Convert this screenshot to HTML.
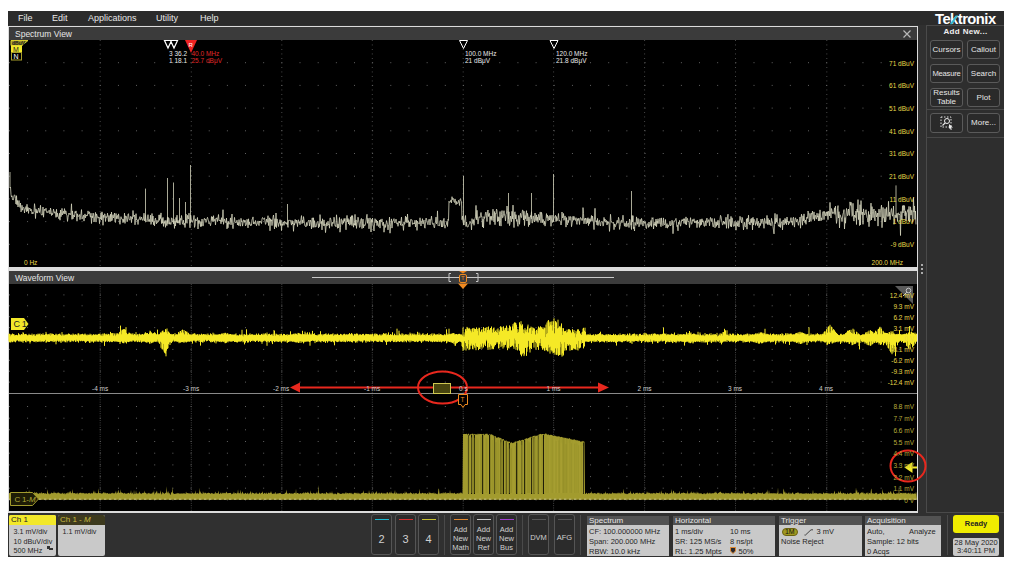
<!DOCTYPE html>
<html><head><meta charset="utf-8">
<style>
*{margin:0;padding:0;box-sizing:border-box}
html,body{width:1012px;height:567px;background:#fff;overflow:hidden}
body{position:relative;font-family:"Liberation Sans",sans-serif;}
.a{position:absolute}
.frame{left:8px;top:11px;width:996px;height:546px;background:#303030}
.menu{left:8px;top:11px;width:996px;height:14px;background:#2b2b2b;color:#e8e8e8;font-size:9px;line-height:14px}
.menu span{position:absolute;top:0}
.logo{left:935px;top:11px;font-size:14.8px;font-weight:bold;color:#fff;letter-spacing:-0.55px;line-height:16px}
.title{background:#3b3b3b;color:#e6e6e6;font-size:8.5px;line-height:14.5px;padding-left:6px}
.plot{background:#000}
.lbl{position:absolute;color:#e8d84a;font-size:6.5px;line-height:7px;white-space:nowrap}
.lbl2{position:absolute;color:#b8ac3a;font-size:6.5px;line-height:7px;white-space:nowrap}
.wt{position:absolute;color:#e8e8e8;font-size:6.5px;line-height:7px;white-space:nowrap}
.btn{position:absolute;background:#2a2a2a;border:1px solid #5a5a5a;border-radius:3px;color:#e6e6e6;font-size:8px;text-align:center}
.bb{position:absolute;background:#2b2b2b;border:1px solid #555;border-radius:3px;color:#d0d0d0;text-align:center}
.box{position:absolute;background:#c9c9c9}
.box .h{position:absolute;left:0;top:0;right:0;height:9px;background:#525252;color:#e8e8e8;font-size:8px;line-height:9px;padding-left:2px}
.box .t{position:absolute;color:#262626;font-size:7.5px;line-height:8.5px;white-space:nowrap}
</style></head><body>
<div class="a frame"></div>
<div class="a menu">
<span style="left:10px">File</span><span style="left:44px">Edit</span><span style="left:80px">Applications</span><span style="left:148px">Utility</span><span style="left:192px">Help</span>
</div>
<div class="a logo">Te<span style="color:#fff">k</span>tronix</div>
<svg class="a" style="left:948px;top:12px" width="12" height="14" viewBox="0 0 12 14"><path d="M1.8 12.2 L4.3 12.2 L10.2 3.4 L7.7 3.4 Z" fill="#30b8d0"/></svg>

<!-- spectrum view -->
<div class="a" style="left:8px;top:26px;width:910px;height:245px;background:#dcdcdc"></div>
<div class="a title" style="left:9px;top:27px;width:908px;height:13px">Spectrum View</div>
<div class="a plot" style="left:9px;top:40px;width:908px;height:227px"></div>

<!-- waveform view -->
<div class="a" style="left:8px;top:271px;width:910px;height:242px;background:#dcdcdc"></div>
<div class="a title" style="left:9px;top:271px;width:908px;height:13px">Waveform View</div>
<div class="a plot" style="left:9px;top:284px;width:908px;height:227px"></div>


<!-- right panel -->
<div class="a" style="left:926px;top:25px;width:78px;height:488px;border:1px solid #4a4a4a;border-right:none;background:#2e2e2e"></div>
<div class="a" style="left:927px;top:27px;width:77px;text-align:center;color:#eeeeee;font-size:8px;font-weight:bold;line-height:10px;letter-spacing:0.35px">Add New...</div>
<div class="btn" style="left:930px;top:40px;width:33px;height:19px;line-height:17px">Cursors</div>
<div class="btn" style="left:967px;top:40px;width:33px;height:19px;line-height:17px">Callout</div>
<div class="btn" style="left:930px;top:64px;width:33px;height:19px;line-height:17px;font-size:7.6px;letter-spacing:-0.2px">Measure</div>
<div class="btn" style="left:967px;top:64px;width:33px;height:19px;line-height:17px">Search</div>
<div class="btn" style="left:930px;top:88px;width:33px;height:19px;line-height:8.5px;padding-top:0px">Results<br>Table</div>
<div class="btn" style="left:967px;top:88px;width:33px;height:19px;line-height:17px">Plot</div>
<div class="a" style="left:927px;top:109px;width:77px;height:1px;background:#484848"></div>
<div class="btn" style="left:930px;top:113px;width:33px;height:20px"></div>
<div class="btn" style="left:967px;top:113px;width:33px;height:20px;line-height:18px">More...</div>
<div class="a" style="left:927px;top:137px;width:77px;height:1px;background:#484848"></div>
<svg class="a" style="left:939px;top:115px" width="16" height="16" viewBox="0 0 16 16">
<rect x="2" y="2" width="10" height="10" fill="none" stroke="#ddd" stroke-width="1" stroke-dasharray="1.5 1.5"/>
<circle cx="8" cy="6" r="2.5" fill="none" stroke="#eee" stroke-width="1"/>
<line x1="6.2" y1="7.8" x2="3.5" y2="10.5" stroke="#eee" stroke-width="1.2"/>
<path d="M10 9 L14 12.5 L12 12.5 L12.8 14.5 L11.8 15 L11 13 L10 14 Z" fill="#eee"/>
</svg>

<!-- close X -->
<svg class="a" style="left:902px;top:29px" width="10" height="10" viewBox="0 0 10 10"><path d="M1.5 1.5 L8.5 8.5 M8.5 1.5 L1.5 8.5" stroke="#b8b8b8" stroke-width="1.2"/></svg>

<!-- splitter dots -->
<div class="a" style="left:921px;top:264px;width:2px;height:2px;background:#aaa"></div>
<div class="a" style="left:921px;top:268px;width:2px;height:2px;background:#aaa"></div>
<div class="a" style="left:921px;top:272px;width:2px;height:2px;background:#aaa"></div>


<!-- bottom bar -->
<div class="box" style="left:9px;top:515px;width:47px;height:41px;border-radius:2px;overflow:hidden">
 <div class="h" style="background:#f2e82a;color:#222;height:10px;line-height:10px">Ch 1</div>
 <div class="t" style="left:4.5px;top:13px;font-size:7.2px">3.1 mV/div</div>
 <div class="t" style="left:4.5px;top:22.8px;font-size:7.2px">10 dBuV/div</div>
 <div class="t" style="left:4.5px;top:32.3px;font-size:7.2px">500 MHz</div>
 <div class="a" style="left:38px;top:31px;width:3px;height:3px;background:#333"></div>
 <div class="a" style="left:40px;top:33px;width:4px;height:2px;background:#333"></div>
</div>
<div class="box" style="left:58px;top:515px;width:47px;height:41px;border-radius:2px;overflow:hidden">
 <div class="h" style="background:#3d3a1e;color:#c8b840;height:10px;line-height:10px">Ch 1 - <i>M</i></div>
 <div class="t" style="left:4.5px;top:13px;font-size:7.2px">1.1 mV/div</div>
</div>

<div class="bb" style="left:371px;top:514px;width:21px;height:41px"><div class="a" style="left:2.5px;top:4px;width:14.5px;height:1px;background:#1cb8d0"></div><div class="a" style="left:0;top:17.5px;width:19px;font-size:11px;line-height:12px">2</div></div>
<div class="bb" style="left:395px;top:514px;width:21px;height:41px"><div class="a" style="left:2.5px;top:4px;width:14.5px;height:1px;background:#d83030"></div><div class="a" style="left:0;top:17.5px;width:19px;font-size:11px;line-height:12px">3</div></div>
<div class="bb" style="left:418px;top:514px;width:21px;height:41px"><div class="a" style="left:2.5px;top:4px;width:14.5px;height:1px;background:#c8c030"></div><div class="a" style="left:0;top:17.5px;width:19px;font-size:11px;line-height:12px">4</div></div>
<div class="a" style="left:444px;top:515px;width:1px;height:40px;background:#4a4a4a"></div>
<div class="bb" style="left:450px;top:514px;width:21px;height:41px;font-size:7.5px;line-height:8.5px"><div class="a" style="left:2.5px;top:4px;width:14.5px;height:1px;background:#e08830"></div><div class="a" style="left:0;top:10px;width:19px;line-height:9px">Add<br>New<br>Math</div></div>
<div class="bb" style="left:473px;top:514px;width:21px;height:41px;font-size:7.5px;line-height:8.5px"><div class="a" style="left:2.5px;top:4px;width:14.5px;height:1px;background:#c8c8c8"></div><div class="a" style="left:0;top:10px;width:19px;line-height:9px">Add<br>New<br>Ref</div></div>
<div class="bb" style="left:496px;top:514px;width:21px;height:41px;font-size:7.5px;line-height:8.5px"><div class="a" style="left:2.5px;top:4px;width:14.5px;height:1px;background:#a040d0"></div><div class="a" style="left:0;top:10px;width:19px;line-height:9px">Add<br>New<br>Bus</div></div>
<div class="a" style="left:522px;top:515px;width:1px;height:40px;background:#4a4a4a"></div>
<div class="bb" style="left:528px;top:514px;width:21px;height:41px;font-size:7.5px"><div class="a" style="left:2.5px;top:4px;width:14.5px;height:1px;background:#555"></div><div class="a" style="left:-2px;top:18px;width:23px;line-height:9px">DVM</div></div>
<div class="bb" style="left:554px;top:514px;width:21px;height:41px;font-size:7.5px"><div class="a" style="left:2.5px;top:4px;width:14.5px;height:1px;background:#555"></div><div class="a" style="left:-2px;top:18px;width:23px;line-height:9px">AFG</div></div>
<div class="a" style="left:580px;top:515px;width:1px;height:40px;background:#4a4a4a"></div>

<div class="box" style="left:587px;top:516px;width:82px;height:40px">
 <div class="h">Spectrum</div>
 <div class="t" style="left:2px;top:11.6px">CF: 100.000000 MHz</div>
 <div class="t" style="left:2px;top:21.8px">Span: 200.000 MHz</div>
 <div class="t" style="left:2px;top:31.9px">RBW: 10.0 kHz</div>
</div>
<div class="box" style="left:673px;top:516px;width:102px;height:40px">
 <div class="h">Horizontal</div>
 <div class="t" style="left:2px;top:11.6px">1 ms/div</div>
 <div class="t" style="left:57px;top:11.6px">10 ms</div>
 <div class="t" style="left:2px;top:21.8px">SR: 125 MS/s</div>
 <div class="t" style="left:57px;top:21.8px">8 ns/pt</div>
 <div class="t" style="left:2px;top:31.9px">RL: 1.25 Mpts</div>
 <svg class="a" style="left:57px;top:31px" width="6" height="7" viewBox="0 0 6 7"><path d="M0.5 0.5 H5.5 V4 L3 6.5 L0.5 4 Z" fill="#2a2a30" stroke="#e08830" stroke-width="1"/></svg>
 <div class="t" style="left:65.5px;top:31.9px">50%</div>
</div>
<div class="box" style="left:779px;top:516px;width:83px;height:40px">
 <div class="h">Trigger</div>
 <div class="a" style="left:3px;top:12px;width:15.5px;height:8px;border-radius:4px;background:#a09820;border:1px solid #6a6210;color:#111;font-size:7px;line-height:6.5px;text-align:center">1M</div>
 <svg class="a" style="left:25px;top:12.5px" width="10" height="8" viewBox="0 0 10 8"><path d="M0.5 6 H1.5 L7 0.8 H9" fill="none" stroke="#333" stroke-width="0.9"/></svg>
 <div class="t" style="left:37.5px;top:12px">3 mV</div>
 <div class="t" style="left:2px;top:21.5px">Noise Reject</div>
</div>
<div class="box" style="left:865px;top:516px;width:76px;height:40px">
 <div class="h">Acquisition</div>
 <div class="t" style="left:2px;top:11.6px">Auto,</div>
 <div class="t" style="left:44px;top:11.6px">Analyze</div>
 <div class="t" style="left:2px;top:21.8px">Sample: 12 bits</div>
 <div class="t" style="left:2px;top:31.9px">0 Acqs</div>
</div>
<div class="a" style="left:947px;top:515px;width:1px;height:40px;background:#4a4a4a"></div>
<div class="a" style="left:953px;top:515px;width:46px;height:18px;background:#f0ec00;border-radius:3px;color:#222;font-size:7.5px;font-weight:bold;line-height:18px;text-align:center">Ready</div>
<div class="box" style="left:953px;top:538px;width:46px;height:18px;border-radius:2px;text-align:center">
 <div class="t" style="left:0;width:46px;top:0.5px;text-align:center">28 May 2020</div>
 <div class="t" style="left:0;width:46px;top:9px;text-align:center">3:40:11 PM</div>
</div>

<svg class="a" style="left:0;top:0" width="1012" height="567" viewBox="0 0 1012 567">
<g fill="none" stroke="#6a6a6a" stroke-width="1">
<!-- spectrum grid -->
<g id="sg"></g>
</g>
<g fill="none" stroke="#6c6c6c" stroke-width="1"><line x1="100.2" y1="40" x2="100.2" y2="267" stroke="#505050" stroke-dasharray="0.9 3.6"/><line x1="191.3" y1="40" x2="191.3" y2="267" stroke="#505050" stroke-dasharray="0.9 3.6"/><line x1="281.8" y1="40" x2="281.8" y2="267" stroke="#505050" stroke-dasharray="0.9 3.6"/><line x1="372.3" y1="40" x2="372.3" y2="267" stroke="#505050" stroke-dasharray="0.9 3.6"/><line x1="463.2" y1="40" x2="463.2" y2="267" stroke="#505050" stroke-dasharray="0.9 3.6"/><line x1="553.6" y1="40" x2="553.6" y2="267" stroke="#505050" stroke-dasharray="0.9 3.6"/><line x1="644.6" y1="40" x2="644.6" y2="267" stroke="#505050" stroke-dasharray="0.9 3.6"/><line x1="735.5" y1="40" x2="735.5" y2="267" stroke="#505050" stroke-dasharray="0.9 3.6"/><line x1="826.8" y1="40" x2="826.8" y2="267" stroke="#505050" stroke-dasharray="0.9 3.6"/><line x1="9" y1="62.7" x2="917" y2="62.7" stroke-dasharray="0.9 17.26" stroke-dashoffset="-18.16"/><line x1="9" y1="85.4" x2="917" y2="85.4" stroke-dasharray="0.9 17.26" stroke-dashoffset="-18.16"/><line x1="9" y1="108.1" x2="917" y2="108.1" stroke-dasharray="0.9 17.26" stroke-dashoffset="-18.16"/><line x1="9" y1="130.8" x2="917" y2="130.8" stroke-dasharray="0.9 17.26" stroke-dashoffset="-18.16"/><line x1="9" y1="153.5" x2="917" y2="153.5" stroke-dasharray="0.9 17.26" stroke-dashoffset="-18.16"/><line x1="9" y1="176.2" x2="917" y2="176.2" stroke-dasharray="0.9 17.26" stroke-dashoffset="-18.16"/><line x1="9" y1="198.9" x2="917" y2="198.9" stroke-dasharray="0.9 17.26" stroke-dashoffset="-18.16"/><line x1="9" y1="221.6" x2="917" y2="221.6" stroke-dasharray="0.9 17.26" stroke-dashoffset="-18.16"/><line x1="9" y1="244.3" x2="917" y2="244.3" stroke-dasharray="0.9 17.26" stroke-dashoffset="-18.16"/><line x1="100.2" y1="284" x2="100.2" y2="393" stroke="#484848" stroke-dasharray="0.9 1.3"/><line x1="191.3" y1="284" x2="191.3" y2="393" stroke="#484848" stroke-dasharray="0.9 1.3"/><line x1="281.8" y1="284" x2="281.8" y2="393" stroke="#484848" stroke-dasharray="0.9 1.3"/><line x1="372.3" y1="284" x2="372.3" y2="393" stroke="#484848" stroke-dasharray="0.9 1.3"/><line x1="463.2" y1="284" x2="463.2" y2="393" stroke="#484848" stroke-dasharray="0.9 1.3"/><line x1="553.6" y1="284" x2="553.6" y2="393" stroke="#484848" stroke-dasharray="0.9 1.3"/><line x1="644.6" y1="284" x2="644.6" y2="393" stroke="#484848" stroke-dasharray="0.9 1.3"/><line x1="735.5" y1="284" x2="735.5" y2="393" stroke="#484848" stroke-dasharray="0.9 1.3"/><line x1="826.8" y1="284" x2="826.8" y2="393" stroke="#484848" stroke-dasharray="0.9 1.3"/><line x1="9" y1="294.9" x2="917" y2="294.9" stroke-dasharray="0.9 17.26" stroke-dashoffset="-18.16"/><line x1="9" y1="305.8" x2="917" y2="305.8" stroke-dasharray="0.9 17.26" stroke-dashoffset="-18.16"/><line x1="9" y1="316.7" x2="917" y2="316.7" stroke-dasharray="0.9 17.26" stroke-dashoffset="-18.16"/><line x1="9" y1="327.6" x2="917" y2="327.6" stroke-dasharray="0.9 17.26" stroke-dashoffset="-18.16"/><line x1="9" y1="338.5" x2="917" y2="338.5" stroke-dasharray="0.9 17.26" stroke-dashoffset="-18.16"/><line x1="9" y1="349.4" x2="917" y2="349.4" stroke-dasharray="0.9 17.26" stroke-dashoffset="-18.16"/><line x1="9" y1="360.3" x2="917" y2="360.3" stroke-dasharray="0.9 17.26" stroke-dashoffset="-18.16"/><line x1="9" y1="371.2" x2="917" y2="371.2" stroke-dasharray="0.9 17.26" stroke-dashoffset="-18.16"/><line x1="9" y1="382.1" x2="917" y2="382.1" stroke-dasharray="0.9 17.26" stroke-dashoffset="-18.16"/><line x1="100.2" y1="394.8" x2="100.2" y2="511.6" stroke="#484848" stroke-dasharray="0.9 1.4"/><line x1="191.3" y1="394.8" x2="191.3" y2="511.6" stroke="#484848" stroke-dasharray="0.9 1.4"/><line x1="281.8" y1="394.8" x2="281.8" y2="511.6" stroke="#484848" stroke-dasharray="0.9 1.4"/><line x1="372.3" y1="394.8" x2="372.3" y2="511.6" stroke="#484848" stroke-dasharray="0.9 1.4"/><line x1="463.2" y1="394.8" x2="463.2" y2="511.6" stroke="#484848" stroke-dasharray="0.9 1.4"/><line x1="553.6" y1="394.8" x2="553.6" y2="511.6" stroke="#484848" stroke-dasharray="0.9 1.4"/><line x1="644.6" y1="394.8" x2="644.6" y2="511.6" stroke="#484848" stroke-dasharray="0.9 1.4"/><line x1="735.5" y1="394.8" x2="735.5" y2="511.6" stroke="#484848" stroke-dasharray="0.9 1.4"/><line x1="826.8" y1="394.8" x2="826.8" y2="511.6" stroke="#484848" stroke-dasharray="0.9 1.4"/><line x1="9" y1="406.5" x2="917" y2="406.5" stroke-dasharray="0.9 17.26" stroke-dashoffset="-18.16"/><line x1="9" y1="418.2" x2="917" y2="418.2" stroke-dasharray="0.9 17.26" stroke-dashoffset="-18.16"/><line x1="9" y1="429.8" x2="917" y2="429.8" stroke-dasharray="0.9 17.26" stroke-dashoffset="-18.16"/><line x1="9" y1="441.5" x2="917" y2="441.5" stroke-dasharray="0.9 17.26" stroke-dashoffset="-18.16"/><line x1="9" y1="453.2" x2="917" y2="453.2" stroke-dasharray="0.9 17.26" stroke-dashoffset="-18.16"/><line x1="9" y1="464.9" x2="917" y2="464.9" stroke-dasharray="0.9 17.26" stroke-dashoffset="-18.16"/><line x1="9" y1="476.6" x2="917" y2="476.6" stroke-dasharray="0.9 17.26" stroke-dashoffset="-18.16"/><line x1="9" y1="488.2" x2="917" y2="488.2" stroke-dasharray="0.9 17.26" stroke-dashoffset="-18.16"/><line x1="9" y1="499.9" x2="917" y2="499.9" stroke-dasharray="0.9 17.26" stroke-dashoffset="-18.16"/></g>
<!-- spectrum trace -->
<path d="M10 172 L10 188 10 188 L10.5 187.1 L11 194.5 L11.5 197 L12 195.8 L12.5 199.9 L13 199.4 L13.5 199.7 L14 195.9 L14.5 194.8 L15 195.7 L15.5 198.4 L16 204 L16.5 195.7 L17 204.8 L17.5 200.5 L18 207 L18.5 203.9 L19 200.5 L19.5 204.9 L20 207.4 L20.5 203 L21 211.9 L21.5 210.3 L22 205.3 L22.5 210.2 L23 208 L23.5 207.2 L24 207.8 L24.5 213 L25 208.9 L25.5 208.8 L26 206.5 L26.5 211.7 L27 204.3 L27.5 211.1 L28 207.4 L28.5 213.4 L29 208.1 L29.5 208.5 L30 208 L30.5 210.8 L31 209.1 L31.5 209.8 L32 213.9 L32.5 212.4 L33 213.8 L33.5 212.4 L34 211.7 L34.5 203.7 L35 207.7 L35.5 218.5 L36 208.9 L36.5 212.8 L37 210.5 L37.5 213.1 L38 211.2 L38.5 208 L39 208.8 L39.5 212.5 L40 210 L40.5 205.3 L41 213.3 L41.5 215 L42 214.8 L42.5 214.9 L43 207 L43.5 217.2 L44 211.4 L44.5 209.1 L45 210.6 L45.5 209.8 L46 208.2 L46.5 212.1 L47 212.7 L47.5 211.6 L48 212.7 L48.5 211.7 L49 210.1 L49.5 210.6 L50 214 L50.5 208 L51 210.8 L51.5 215.5 L52 213.3 L52.5 214.7 L53 212.7 L53.5 209.1 L54 211.5 L54.5 213.2 L55 211.6 L55.5 212.3 L56 217.4 L56.5 209.3 L57 216.8 L57.5 213.1 L58 216.3 L58.5 216.8 L59 218.9 L59.5 213.2 L60 220.2 L60.5 210 L61 216.7 L61.5 213.9 L62 208.4 L62.5 214.9 L63 213.2 L63.5 211.2 L64 213.6 L64.5 208.6 L65 214 L65.5 210.9 L66 210.9 L66.5 215 L67 215.6 L67.5 221.4 L68 217.5 L68.5 214.5 L69 213 L69.5 214.4 L70 213.7 L70.5 214.7 L71 212.4 L71.5 203.8 L72 219.4 L72.5 210.9 L73 218.8 L73.5 215.2 L74 215.2 L74.5 217 L75 211.6 L75.5 212.9 L76 210.9 L76.5 215.3 L77 221.2 L77.5 213.8 L78 216.7 L78.5 216.3 L79 215.8 L79.5 214.6 L80 219.6 L80.5 215.6 L81 213.8 L81.5 209.6 L82 219.1 L82.5 218.1 L83 216.6 L83.5 215.2 L84 221.1 L84.5 215.8 L85 213.9 L85.5 217.8 L86 215 L86.5 216 L87 214.9 L87.5 215.5 L88 210.9 L88.5 213.5 L89 213.8 L89.5 211.8 L90 215.4 L90.5 217.2 L91 213.2 L91.5 223.5 L92 216 L92.5 217.8 L93 213 L93.5 213.7 L94 222 L94.5 218.8 L95 216.3 L95.5 212.4 L96 222.1 L96.5 213.9 L97 215.4 L97.5 216.5 L98 218.2 L98.5 217.1 L99 217 L99.5 223.7 L100 217.6 L100.5 218.8 L101 212.7 L101.5 219.9 L102 211.8 L102.5 215.3 L103 225.3 L103.5 215.1 L104 217.6 L104.5 213.9 L105 213.9 L105.5 221.5 L106 216.3 L106.5 217.5 L107 216.9 L107.5 213.2 L108 217.5 L108.5 221.6 L109 215.5 L109.5 219.6 L110 221.8 L110.5 214.2 L111 221.1 L111.5 212 L112 220.5 L112.5 217.2 L113 214.7 L113.5 218 L114 216.5 L114.5 213 L115 222.1 L115.5 222.4 L116 213.5 L116.5 218.7 L117 216.1 L117.5 215.5 L118 218.9 L118.5 213.9 L119 216.9 L119.5 222.1 L120 224.3 L120.5 220.6 L121 216.7 L121.5 218.8 L122 219.2 L122.5 219.1 L123 222.7 L123.5 219.4 L124 221.8 L124.5 213.1 L125 223.4 L125.5 216 L126 215.9 L126.5 217 L127 221.8 L127.5 221.3 L128 214.4 L128.5 213.7 L129 218.9 L129.5 219.9 L130 220.2 L130.5 216.5 L131 216.6 L131.5 222.6 L132 216.8 L132.5 218.8 L133 210.5 L133.5 216.4 L134 216.4 L134.5 215 L135 224.8 L135.5 218.7 L136 213.7 L136.5 220 L137 219.8 L137.5 219.9 L138 224.5 L138.5 219.7 L139 219.9 L139.5 217.6 L140 216.6 L140.5 219.8 L141 219.6 L141.5 217 L142 218.4 L142.5 220.2 L143 220.5 L143.5 218.1 L144 213.2 L144.5 220.8 L145 218.8 L145.5 214.7 L146 220.6 L146.5 221.1 L147 221.8 L147.5 218.8 L148 214.7 L148.5 221.2 L149 221.6 L149.5 219.5 L150 221.8 L150.5 215.2 L151 224.4 L151.5 221.2 L152 213.5 L152.5 221.7 L153 216 L153.5 224.7 L154 221.4 L154.5 225.9 L155 219.6 L155.5 218.1 L156 221.8 L156.5 223.9 L157 220.3 L157.5 222.5 L158 221.9 L158.5 221.7 L159 214.9 L159.5 220.3 L160 214.8 L160.5 218.5 L161 212.9 L161.5 223.6 L162 218.5 L162.5 223.2 L163 217.4 L163.5 226.4 L164 221.7 L164.5 223.3 L165 220.5 L165.5 227.3 L166 220.5 L166.5 225.2 L167 225.7 L167.5 216.9 L168 224.2 L168.5 217.6 L169 218.5 L169.5 224.2 L170 222.4 L170.5 224.2 L171 224.5 L171.5 217.8 L172 218.4 L172.5 221.6 L173 221 L173.5 223.9 L174 219.3 L174.5 228.4 L175 221 L175.5 226 L176 217.5 L176.5 222.4 L177 215.2 L177.5 223.1 L178 220.4 L178.5 223 L179 222.6 L179.5 219.7 L180 224.7 L180.5 218.4 L181 220.2 L181.5 215.5 L182 219.7 L182.5 224.2 L183 223.4 L183.5 220.2 L184 225.1 L184.5 223.3 L185 227.5 L185.5 222.9 L186 214.1 L186.5 220.4 L187 223.3 L187.5 215.3 L188 218.5 L188.5 219 L189 213.2 L189.5 221.9 L190 227.8 L190.5 215 L191 217 L191.5 221.4 L192 222.3 L192.5 222.1 L193 220.1 L193.5 219.3 L194 215.4 L194.5 227.4 L195 225.7 L195.5 218.9 L196 221 L196.5 220.2 L197 219.7 L197.5 217.5 L198 229 L198.5 220.4 L199 223.6 L199.5 220.5 L200 222.2 L200.5 226.6 L201 221.6 L201.5 226.4 L202 219 L202.5 223.6 L203 226.1 L203.5 223.9 L204 219.1 L204.5 218.2 L205 220.1 L205.5 219.2 L206 222.4 L206.5 220.7 L207 218.8 L207.5 217.3 L208 219.2 L208.5 221.2 L209 223.8 L209.5 222.6 L210 223.6 L210.5 225.7 L211 222.8 L211.5 216.5 L212 220.6 L212.5 216.9 L213 221.8 L213.5 215.7 L214 221.2 L214.5 219.6 L215 219.1 L215.5 224.9 L216 218.1 L216.5 218.7 L217 217.7 L217.5 221.5 L218 218.3 L218.5 214.5 L219 220.2 L219.5 221 L220 220 L220.5 220 L221 223.8 L221.5 217.7 L222 221.9 L222.5 220 L223 209.7 L223.5 224.3 L224 221.4 L224.5 218.9 L225 220.8 L225.5 222.1 L226 222.8 L226.5 218 L227 228.9 L227.5 222.6 L228 227.8 L228.5 221.4 L229 224.3 L229.5 222.8 L230 222.2 L230.5 217.9 L231 224.8 L231.5 221 L232 214 L232.5 225.7 L233 228.7 L233.5 224.4 L234 222.2 L234.5 217.4 L235 221.7 L235.5 222.5 L236 222.9 L236.5 222 L237 220.2 L237.5 225 L238 222.4 L238.5 225.5 L239 219.6 L239.5 223 L240 226 L240.5 226 L241 218.3 L241.5 221.7 L242 220.8 L242.5 226.1 L243 223.4 L243.5 219.9 L244 220 L244.5 222.3 L245 220.1 L245.5 225.9 L246 225.1 L246.5 224.1 L247 219.3 L247.5 221 L248 227.9 L248.5 218.8 L249 224.8 L249.5 221.9 L250 224.4 L250.5 225.7 L251 224.3 L251.5 225.4 L252 219.2 L252.5 219.1 L253 216.9 L253.5 223.9 L254 221.8 L254.5 222.3 L255 224.2 L255.5 220.5 L256 222.5 L256.5 225.8 L257 223.9 L257.5 223.5 L258 220.9 L258.5 223.6 L259 225.6 L259.5 221 L260 222.5 L260.5 221.4 L261 221.6 L261.5 223.6 L262 218.9 L262.5 217.5 L263 218.8 L263.5 219.1 L264 218.8 L264.5 217.8 L265 221.3 L265.5 224.4 L266 223.1 L266.5 219.1 L267 221.6 L267.5 222.3 L268 215.7 L268.5 225.5 L269 219.8 L269.5 217.8 L270 230.8 L270.5 218.8 L271 221.2 L271.5 219.8 L272 225.6 L272.5 221.3 L273 217.3 L273.5 215 L274 220.4 L274.5 229 L275 218.7 L275.5 226.6 L276 213 L276.5 227.6 L277 218.9 L277.5 221.9 L278 223.6 L278.5 226.5 L279 222.7 L279.5 223.1 L280 219.6 L280.5 225.4 L281 220.4 L281.5 230.6 L282 223.8 L282.5 225.4 L283 222 L283.5 222 L284 225.3 L284.5 221.3 L285 222.6 L285.5 222.2 L286 224.1 L286.5 224 L287 222.4 L287.5 225.4 L288 227.4 L288.5 220.3 L289 220.6 L289.5 220.4 L290 220.2 L290.5 220.4 L291 222.8 L291.5 225.1 L292 220.3 L292.5 224 L293 221.2 L293.5 231.3 L294 223.4 L294.5 225.1 L295 219.4 L295.5 219.8 L296 223.3 L296.5 220.1 L297 222.4 L297.5 226.6 L298 220.2 L298.5 219.9 L299 223.2 L299.5 221.8 L300 224.7 L300.5 222.1 L301 219.1 L301.5 215.6 L302 223.7 L302.5 220.3 L303 223 L303.5 216.6 L304 220.1 L304.5 223.8 L305 226 L305.5 226.1 L306 226.9 L306.5 222.5 L307 225.8 L307.5 223.7 L308 221.7 L308.5 221 L309 220 L309.5 226 L310 222.7 L310.5 220.2 L311 222.2 L311.5 229 L312 217.9 L312.5 218 L313 227.4 L313.5 217.8 L314 227.3 L314.5 220.7 L315 224 L315.5 227 L316 227 L316.5 225.2 L317 222.6 L317.5 221.7 L318 221.8 L318.5 227.9 L319 223.7 L319.5 226.6 L320 214.6 L320.5 221.4 L321 223.7 L321.5 221.4 L322 229.9 L322.5 218.8 L323 224.4 L323.5 225.7 L324 219.9 L324.5 225.6 L325 224.1 L325.5 232.6 L326 227.7 L326.5 222.6 L327 226 L327.5 224.1 L328 221.2 L328.5 225 L329 224.4 L329.5 228.2 L330 217.9 L330.5 218.1 L331 220.1 L331.5 225 L332 226.4 L332.5 222.3 L333 223.6 L333.5 222.9 L334 217.2 L334.5 219.9 L335 225.9 L335.5 225.6 L336 226.8 L336.5 214.8 L337 220.4 L337.5 228.3 L338 223.9 L338.5 227.9 L339 223.1 L339.5 217.5 L340 232.2 L340.5 227.3 L341 219.7 L341.5 218.8 L342 223.9 L342.5 224.4 L343 220.4 L343.5 223.2 L344 218.6 L344.5 221.3 L345 218.4 L345.5 223.6 L346 229.8 L346.5 220.7 L347 215.4 L347.5 221.8 L348 218.5 L348.5 224 L349 219.6 L349.5 225 L350 225.1 L350.5 216.9 L351 224.4 L351.5 215.7 L352 225.6 L352.5 215.6 L353 219.2 L353.5 227.2 L354 223.5 L354.5 225.1 L355 214.4 L355.5 225.4 L356 219.9 L356.5 228.4 L357 222.9 L357.5 222.4 L358 217.2 L358.5 219.6 L359 222.6 L359.5 227.4 L360 227.1 L360.5 221.9 L361 218.8 L361.5 218.5 L362 228.6 L362.5 223.8 L363 219.1 L363.5 227.9 L364 224.6 L364.5 225.4 L365 225.7 L365.5 224 L366 221 L366.5 217.1 L367 214.3 L367.5 223.3 L368 218.2 L368.5 219.8 L369 228.8 L369.5 221.8 L370 217.9 L370.5 220.8 L371 232 L371.5 219.5 L372 222.3 L372.5 218 L373 224.6 L373.5 227.1 L374 231 L374.5 223.9 L375 218.7 L375.5 219.8 L376 222.8 L376.5 219.9 L377 225.6 L377.5 221 L378 224 L378.5 226.5 L379 225.2 L379.5 220.1 L380 228.1 L380.5 219.6 L381 221.5 L381.5 221.6 L382 218.9 L382.5 224.7 L383 225.7 L383.5 222.2 L384 232.2 L384.5 227 L385 224.4 L385.5 227.4 L386 224.4 L386.5 220.6 L387 222.5 L387.5 224.6 L388 229.9 L388.5 225.2 L389 224.9 L389.5 217.1 L390 233.2 L390.5 226.5 L391 222.6 L391.5 218.9 L392 228.1 L392.5 221.5 L393 221.4 L393.5 219.8 L394 218.6 L394.5 222.6 L395 223 L395.5 221.4 L396 219.1 L396.5 221.7 L397 224.1 L397.5 222.8 L398 226.3 L398.5 223.2 L399 221 L399.5 223 L400 221.3 L400.5 225.2 L401 220.7 L401.5 217.1 L402 225.8 L402.5 224.3 L403 225.3 L403.5 230.4 L404 221.8 L404.5 224.4 L405 223.3 L405.5 216.1 L406 222 L406.5 217.3 L407 222.9 L407.5 214 L408 222.2 L408.5 220.6 L409 226.8 L409.5 222 L410 226.7 L410.5 220.1 L411 219.2 L411.5 220.1 L412 219.9 L412.5 224.4 L413 223.5 L413.5 224.1 L414 222.8 L414.5 223.9 L415 220.2 L415.5 226.9 L416 223.7 L416.5 220.2 L417 230.4 L417.5 221.2 L418 222.4 L418.5 223.6 L419 223.7 L419.5 223.9 L420 217.8 L420.5 222.2 L421 226 L421.5 221.5 L422 222.2 L422.5 218.7 L423 224 L423.5 221.7 L424 220.2 L424.5 227 L425 228.2 L425.5 221.5 L426 218 L426.5 218.6 L427 221.9 L427.5 223.3 L428 224.7 L428.5 220.8 L429 219.1 L429.5 219.6 L430 225 L430.5 219.6 L431 219.9 L431.5 216.1 L432 221.4 L432.5 224.2 L433 224.2 L433.5 223.5 L434 227.2 L434.5 227.9 L435 223.3 L435.5 222 L436 217.1 L436.5 223.9 L437 222.6 L437.5 210.9 L438 225.3 L438.5 226 L439 225.4 L439.5 225.7 L440 220.9 L440.5 220.2 L441 222.1 L441.5 227 L442 220.6 L442.5 227 L443 225.8 L443.5 220.1 L444 218.3 L444.5 226.3 L445 228.2 L445.5 225.7 L446 224.7 L446.5 224.3 L447 221.3 L447.5 226.5 L448 219.3 L448.5 220.4 L449 201.2 L449.5 202.4 L450 201.8 L450.5 201.9 L451 199.9 L451.5 202.9 L452 196.7 L452.5 199.6 L453 198.2 L453.5 198.7 L454 201.7 L454.5 202.5 L455 198.9 L455.5 200.9 L456 204.7 L456.5 201.5 L457 203.8 L457.5 203 L458 203.2 L458.5 200.3 L459 201.6 L459.5 205.5 L460 199.4 L460.5 198.6 L461 200.9 L461.5 201.4 L462 219.7 L462.5 216.1 L463 221.6 L463.5 224 L464 225 L464.5 220.8 L465 219 L465.5 215.5 L466 226.5 L466.5 222 L467 226.5 L467.5 226.8 L468 227.1 L468.5 225.4 L469 224.4 L469.5 223.8 L470 221.3 L470.5 222.6 L471 222.7 L471.5 229.9 L472 218.7 L472.5 221.9 L473 223.7 L473.5 219.6 L474 225.3 L474.5 220.6 L475 218.5 L475.5 216.9 L476 205.4 L476.5 219.7 L477 210.3 L477.5 218.3 L478 224.1 L478.5 221.1 L479 216.7 L479.5 217 L480 217.6 L480.5 215.6 L481 212.5 L481.5 216.7 L482 216.4 L482.5 227 L483 219.2 L483.5 228 L484 216.6 L484.5 218.5 L485 216.9 L485.5 212.6 L486 212 L486.5 215.3 L487 221.6 L487.5 211.4 L488 210 L488.5 216.5 L489 213.6 L489.5 213.3 L490 224.6 L490.5 216.4 L491 219.5 L491.5 216.3 L492 220.5 L492.5 215.2 L493 209.2 L493.5 218.4 L494 221.9 L494.5 211.5 L495 224.7 L495.5 213.3 L496 213.8 L496.5 209.1 L497 210.6 L497.5 221.6 L498 216.6 L498.5 221.1 L499 217.2 L499.5 225.7 L500 211.5 L500.5 220.6 L501 226.1 L501.5 214.3 L502 210.6 L502.5 217.8 L503 217.5 L503.5 213.6 L504 210.7 L504.5 215.2 L505 216.2 L505.5 220.9 L506 214.5 L506.5 213.1 L507 206 L507.5 210.6 L508 223.6 L508.5 218.2 L509 211.8 L509.5 225.6 L510 223.2 L510.5 216.1 L511 219.1 L511.5 221.7 L512 211.3 L512.5 218.8 L513 205.1 L513.5 217.8 L514 227.6 L514.5 213.2 L515 211.8 L515.5 218.9 L516 214.7 L516.5 221.3 L517 219.6 L517.5 224.3 L518 226.3 L518.5 215.7 L519 215.3 L519.5 224.3 L520 217 L520.5 213.3 L521 217.3 L521.5 217.6 L522 213.7 L522.5 210.1 L523 210.3 L523.5 220 L524 211.2 L524.5 225.6 L525 215.5 L525.5 218.7 L526 214.1 L526.5 210.7 L527 221 L527.5 213.3 L528 216.4 L528.5 226.6 L529 216.9 L529.5 224.9 L530 222.2 L530.5 215.5 L531 217.1 L531.5 211.7 L532 223.1 L532.5 222.9 L533 216.5 L533.5 215.9 L534 220.7 L534.5 222 L535 213 L535.5 218.2 L536 220.8 L536.5 214.9 L537 220.5 L537.5 217.2 L538 222.3 L538.5 214.4 L539 215.7 L539.5 220.2 L540 212.1 L540.5 212.3 L541 222.8 L541.5 212.3 L542 214.7 L542.5 222.7 L543 219.3 L543.5 219.8 L544 224.6 L544.5 221.3 L545 226.1 L545.5 224.4 L546 219 L546.5 213.6 L547 217.7 L547.5 215 L548 220.9 L548.5 217.6 L549 216.2 L549.5 220 L550 215.2 L550.5 217 L551 226.3 L551.5 218.9 L552 215.2 L552.5 222.5 L553 220.2 L553.5 220.3 L554 217.7 L554.5 217.3 L555 216.5 L555.5 215.3 L556 221.6 L556.5 216.6 L557 220.9 L557.5 219.1 L558 217.7 L558.5 213.5 L559 221.1 L559.5 220.5 L560 220.5 L560.5 222.4 L561 225 L561.5 223.3 L562 212 L562.5 218 L563 217.3 L563.5 213.5 L564 220.3 L564.5 217.6 L565 215.9 L565.5 217.2 L566 227.1 L566.5 217.6 L567 223.6 L567.5 224.9 L568 220.2 L568.5 222.5 L569 216.4 L569.5 218.7 L570 220.3 L570.5 216.6 L571 216.8 L571.5 226.7 L572 224 L572.5 219.7 L573 216.3 L573.5 220.3 L574 216.4 L574.5 219.1 L575 220 L575.5 220.4 L576 217.7 L576.5 222.5 L577 224.4 L577.5 218.7 L578 220.6 L578.5 218.3 L579 220.6 L579.5 224.5 L580 218 L580.5 217.5 L581 219.3 L581.5 218.7 L582 220.7 L582.5 220.1 L583 207.6 L583.5 213.6 L584 223.8 L584.5 218.7 L585 219.5 L585.5 218 L586 224 L586.5 223.3 L587 218.4 L587.5 222.8 L588 217.7 L588.5 225.6 L589 219 L589.5 223.7 L590 218.6 L590.5 221.3 L591 219.4 L591.5 215.5 L592 221.3 L592.5 216 L593 218.9 L593.5 223.1 L594 229.6 L594.5 218 L595 208.3 L595.5 219.4 L596 222.1 L596.5 220.7 L597 224.9 L597.5 218.4 L598 225.5 L598.5 222.6 L599 220.6 L599.5 220.3 L600 224.8 L600.5 225.9 L601 222 L601.5 221.5 L602 222.1 L602.5 221.7 L603 226.1 L603.5 225.3 L604 217.4 L604.5 221.3 L605 219 L605.5 222.2 L606 221.5 L606.5 220.4 L607 225 L607.5 221.4 L608 223.6 L608.5 222.1 L609 222.8 L609.5 231.4 L610 224.1 L610.5 214.3 L611 220.6 L611.5 222.1 L612 222.3 L612.5 223 L613 222.8 L613.5 222.2 L614 229.7 L614.5 223.9 L615 226.5 L615.5 226.7 L616 223.9 L616.5 224 L617 220.3 L617.5 220.7 L618 223.2 L618.5 217.3 L619 219.3 L619.5 229.4 L620 226.5 L620.5 224.4 L621 220.6 L621.5 220.2 L622 222.7 L622.5 219.4 L623 215.2 L623.5 220.3 L624 223.1 L624.5 226.2 L625 223.1 L625.5 225.4 L626 226.8 L626.5 221.4 L627 226.5 L627.5 224.3 L628 223.4 L628.5 222.9 L629 227.5 L629.5 219 L630 220 L630.5 224.7 L631 224.9 L631.5 229.5 L632 215.4 L632.5 221.8 L633 215.7 L633.5 228.7 L634 227 L634.5 231 L635 222.4 L635.5 224.8 L636 225.4 L636.5 216.9 L637 221.8 L637.5 224.2 L638 218.4 L638.5 221.2 L639 226.8 L639.5 224.7 L640 219.3 L640.5 219.8 L641 224.5 L641.5 218.4 L642 220.4 L642.5 222.6 L643 226.1 L643.5 221 L644 222 L644.5 223.4 L645 221.5 L645.5 222.1 L646 228.1 L646.5 228.5 L647 224.3 L647.5 224 L648 223.8 L648.5 227.4 L649 222 L649.5 226.4 L650 225.7 L650.5 225 L651 220.5 L651.5 226.6 L652 217.7 L652.5 218.6 L653 217.7 L653.5 229 L654 223.8 L654.5 225.2 L655 221.9 L655.5 225.7 L656 219 L656.5 226.8 L657 220.9 L657.5 223.4 L658 218.8 L658.5 222.5 L659 223.7 L659.5 221.6 L660 218.2 L660.5 224.5 L661 226.7 L661.5 217.9 L662 224.5 L662.5 225.1 L663 225.7 L663.5 217.9 L664 224.1 L664.5 224.9 L665 224 L665.5 219.5 L666 227.9 L666.5 224.7 L667 223.6 L667.5 228.2 L668 224.7 L668.5 226.6 L669 225.5 L669.5 224.7 L670 221.2 L670.5 226 L671 225.1 L671.5 224.7 L672 220.2 L672.5 222 L673 233.7 L673.5 225.5 L674 220.8 L674.5 221.2 L675 220.8 L675.5 219.6 L676 218.4 L676.5 223.2 L677 226.6 L677.5 225.3 L678 230.8 L678.5 222.3 L679 224.3 L679.5 220.4 L680 223.3 L680.5 226.2 L681 224 L681.5 220.1 L682 219.6 L682.5 221 L683 219.3 L683.5 218.9 L684 223.5 L684.5 218.7 L685 220.3 L685.5 224.3 L686 216.9 L686.5 224.9 L687 219.5 L687.5 218.4 L688 221.8 L688.5 221.2 L689 221.9 L689.5 227.6 L690 223.2 L690.5 217.7 L691 221.4 L691.5 224.2 L692 223.8 L692.5 219.6 L693 221.2 L693.5 220.8 L694 218.8 L694.5 222.7 L695 220.8 L695.5 222.3 L696 223.1 L696.5 220.7 L697 227.7 L697.5 220.2 L698 223.4 L698.5 222.2 L699 223.2 L699.5 227.4 L700 219.5 L700.5 225.4 L701 219.4 L701.5 224.6 L702 218.8 L702.5 222.1 L703 220.6 L703.5 221.4 L704 226 L704.5 226.4 L705 222.8 L705.5 220.8 L706 225.8 L706.5 219.1 L707 218.1 L707.5 222.5 L708 221.9 L708.5 219.7 L709 220.8 L709.5 225.8 L710 219.6 L710.5 217.4 L711 220.5 L711.5 221.5 L712 218.4 L712.5 222.8 L713 226.9 L713.5 226.6 L714 223 L714.5 218.6 L715 227.8 L715.5 225.6 L716 221.7 L716.5 226.3 L717 222.2 L717.5 224.9 L718 220.2 L718.5 223.9 L719 228 L719.5 222.7 L720 219.4 L720.5 215.3 L721 216.5 L721.5 220.2 L722 222.3 L722.5 225.1 L723 224.2 L723.5 221 L724 223.5 L724.5 221.9 L725 224.4 L725.5 220.5 L726 217.2 L726.5 228.3 L727 220.6 L727.5 217.4 L728 214.2 L728.5 228.3 L729 222.2 L729.5 219.9 L730 219.2 L730.5 226.4 L731 216.4 L731.5 227 L732 217.8 L732.5 220.4 L733 223.3 L733.5 226.3 L734 226.3 L734.5 225.9 L735 221.3 L735.5 225 L736 230.2 L736.5 222.3 L737 222.9 L737.5 226.2 L738 220.7 L738.5 224 L739 227 L739.5 222 L740 216.3 L740.5 218.9 L741 220.5 L741.5 222.8 L742 217.3 L742.5 218 L743 224.2 L743.5 229.9 L744 225 L744.5 222.3 L745 226.7 L745.5 226.6 L746 226.3 L746.5 218.8 L747 229.2 L747.5 218.2 L748 221.8 L748.5 215.2 L749 223.9 L749.5 222.2 L750 225 L750.5 222 L751 218.8 L751.5 222.6 L752 218.1 L752.5 229.9 L753 217.3 L753.5 225 L754 219.2 L754.5 220.3 L755 220.9 L755.5 225.4 L756 222.9 L756.5 223.3 L757 218.2 L757.5 225.6 L758 222 L758.5 221.3 L759 227.7 L759.5 226 L760 223.1 L760.5 225.5 L761 219 L761.5 222.4 L762 223.5 L762.5 218.9 L763 220.7 L763.5 222.5 L764 228.3 L764.5 218.3 L765 220.5 L765.5 222.9 L766 223.6 L766.5 223.1 L767 215.4 L767.5 224.5 L768 218.3 L768.5 221.7 L769 224.8 L769.5 219.9 L770 224.5 L770.5 223.6 L771 225.8 L771.5 218.3 L772 221.7 L772.5 222.1 L773 226.4 L773.5 230.1 L774 233.9 L774.5 224.7 L775 213.4 L775.5 223.6 L776 218.3 L776.5 222.1 L777 214.4 L777.5 221.8 L778 223.3 L778.5 226.2 L779 225 L779.5 226.7 L780 218.4 L780.5 227.5 L781 223.2 L781.5 222.8 L782 221.5 L782.5 229.9 L783 220.4 L783.5 219.9 L784 224.9 L784.5 222.4 L785 218.3 L785.5 223.3 L786 219.3 L786.5 224.8 L787 217 L787.5 222 L788 221.2 L788.5 224.8 L789 221.5 L789.5 223.2 L790 221.4 L790.5 220 L791 217.6 L791.5 222.4 L792 221 L792.5 225.2 L793 218.1 L793.5 217.2 L794 224 L794.5 227.1 L795 219.6 L795.5 217.8 L796 220.2 L796.5 222.1 L797 219.2 L797.5 219.5 L798 223 L798.5 225.3 L799 221.6 L799.5 221.7 L800 217 L800.5 228.2 L801 218.4 L801.5 214.2 L802 219.2 L802.5 225.2 L803 215.8 L803.5 220.9 L804 213.9 L804.5 220.7 L805 222.7 L805.5 220 L806 224.3 L806.5 217.9 L807 217 L807.5 218.4 L808 211 L808.5 212.8 L809 218.4 L809.5 222 L810 213.4 L810.5 217.5 L811 221.4 L811.5 213.3 L812 214.2 L812.5 211.1 L813 219.3 L813.5 218.5 L814 211.9 L814.5 220.7 L815 215.1 L815.5 215.5 L816 218.2 L816.5 219.1 L817 213.2 L817.5 217.1 L818 215.9 L818.5 221 L819 213.5 L819.5 220.7 L820 209.9 L820.5 217.8 L821 220.9 L821.5 217.8 L822 219.9 L822.5 213.2 L823 211.5 L823.5 211.7 L824 219.6 L824.5 211.5 L825 212.6 L825.5 215.9 L826 213.4 L826.5 212 L827 215.8 L827.5 211.7 L828 219.7 L828.5 211.1 L829 211.8 L829.5 215.9 L830 202.4 L830.5 214.2 L831 218 L831.5 208.5 L832 210.6 L832.5 213.5 L833 212.3 L833.5 213.3 L834 212.9 L834.5 207.8 L835 214.4 L835.5 206.1 L836 216.3 L836.5 223.4 L837 219.7 L837.5 208.7 L838 205.6 L838.5 218 L839 211.7 L839.5 227.9 L840 214.7 L840.5 215.5 L841 217.7 L841.5 217.9 L842 221.6 L842.5 217 L843 214.1 L843.5 212.4 L844 209.6 L844.5 229 L845 217.6 L845.5 223.2 L846 215 L846.5 208.5 L847 210.4 L847.5 215.8 L848 214.9 L848.5 209 L849 213.5 L849.5 215.5 L850 201.9 L850.5 205.3 L851 202.2 L851.5 204.1 L852 216.3 L852.5 215.7 L853 203.3 L853.5 219.3 L854 221.1 L854.5 215 L855 217.2 L855.5 217.4 L856 211 L856.5 224.5 L857 209.1 L857.5 212.2 L858 199.6 L858.5 219.6 L859 210.8 L859.5 225.6 L860 204.7 L860.5 224.9 L861 200.6 L861.5 213.7 L862 214.7 L862.5 212.1 L863 224.3 L863.5 208.9 L864 212.6 L864.5 215 L865 214.4 L865.5 211.6 L866 209.7 L866.5 214.1 L867 217.4 L867.5 218.5 L868 222.1 L868.5 211.4 L869 226.7 L869.5 214.7 L870 220.7 L870.5 214.4 L871 203.1 L871.5 220 L872 206.6 L872.5 211.5 L873 217.7 L873.5 211.2 L874 209 L874.5 217.8 L875 220.9 L875.5 210.9 L876 212.5 L876.5 217 L877 215 L877.5 213 L878 226.1 L878.5 212.7 L879 209.1 L879.5 212.2 L880 216.9 L880.5 210.2 L881 208.7 L881.5 205.1 L882 227.7 L882.5 218 L883 207.4 L883.5 217.6 L884 217.2 L884.5 222 L885 208.7 L885.5 222 L886 219.6 L886.5 207.4 L887 215.7 L887.5 215.9 L888 216.5 L888.5 201.3 L889 216.1 L889.5 212.2 L890 219.7 L890.5 215.8 L891 211 L891.5 208.5 L892 212.9 L892.5 216.2 L893 214.1 L893.5 206 L894 224.3 L894.5 219.8 L895 214.9 L895.5 215.8 L896 218 L896.5 216 L897 213.3 L897.5 221.5 L898 213.6 L898.5 212.8 L899 214.9 L899.5 214 L900 215.6 L900.5 235.5 L901 211.5 L901.5 217.5 L902 220 L902.5 205.7 L903 213 L903.5 205.4 L904 210.3 L904.5 205.6 L905 215.8 L905.5 210.9 L906 220.9 L906.5 212.8 L907 212.2 L907.5 210.9 L908 209.5 L908.5 220.9 L909 206.4 L909.5 222 L910 213.3 L910.5 206.8 L911 215.1 L911.5 210.6 L912 210.4 L912.5 222.3 L913 218.4 L913.5 197.4 L914 212.1 L914.5 206 L915 219.3 L915.5 211 L916 224.4 M145.5 188.6V222.3 M167.5 178V222.7 M173.5 182.5V222.8 M179.5 198V222.9 M185.5 202V223 M190.5 165V223.1 M463.5 176V225 M553.5 174V222 M631.5 191V225 M896 185.4V217 M287.5 204V224.8 M508.5 193V219 M531.5 193V219" fill="none" stroke="#d4d4bc" stroke-width="0.8"/>
<!-- c1 -->
<path d="M9 333.8V341.2 M9.5 333.8V342.3 M10 334.5V340.1 M10.5 336.3V342.4 M11 334.4V342.3 M11.5 334.9V341.2 M12 334.5V341.6 M12.5 333.5V342.2 M13 334.8V341.9 M13.5 334.2V340.8 M14 334.2V340.4 M14.5 335.6V341.4 M15 335.3V341.7 M15.5 335.3V342.3 M16 335V341.3 M16.5 334.8V340.5 M17 335.2V340.2 M17.5 335.4V340.1 M18 335.6V340.6 M18.5 333.2V341.4 M19 335.2V340.6 M19.5 334.4V340.7 M20 335.3V341.9 M20.5 335.2V340.9 M21 334.5V340.5 M21.5 334.1V341.4 M22 336V342 M22.5 334.5V340.8 M23 332.2V342.8 M23.5 332.9V341.1 M24 334.6V340.7 M24.5 334.4V340.7 M25 334.4V340.6 M25.5 334V342 M26 333.9V342.4 M26.5 334.6V339.8 M27 334.9V341.7 M27.5 335.6V340.8 M28 335.4V341 M28.5 335.2V341.1 M29 333.8V341.4 M29.5 335V341.6 M30 334.9V343.5 M30.5 334.8V342 M31 335.3V341.2 M31.5 335.2V340.7 M32 333.6V340.5 M32.5 335.6V341.1 M33 335.7V340.8 M33.5 334.8V341.5 M34 334V341.6 M34.5 335.8V341.7 M35 334.6V341.4 M35.5 336V341.1 M36 336.1V342.3 M36.5 334.3V341.1 M37 336.1V340.4 M37.5 334.6V341.8 M38 333.6V341.5 M38.5 334.7V341.3 M39 333.9V341.9 M39.5 334.3V340.8 M40 333.5V341.5 M40.5 335.4V340.6 M41 335.8V342.1 M41.5 334.2V341.3 M42 335.4V340.6 M42.5 334.8V341.4 M43 333.3V341.2 M43.5 334.8V341.7 M44 335.5V341.3 M44.5 335V341.2 M45 334.6V339.5 M45.5 334.2V339.8 M46 331.9V342.7 M46.5 333.7V342.3 M47 334.2V341.6 M47.5 335.1V341.4 M48 334.2V341 M48.5 334.5V341.9 M49 333.9V341.6 M49.5 334.8V341.9 M50 333.5V341.3 M50.5 335.6V340.9 M51 333.2V341.2 M51.5 334.6V341.2 M52 334.1V340.9 M52.5 333.7V341 M53 335.4V342.1 M53.5 334.1V340.5 M54 335V341.9 M54.5 335V341.4 M55 335.1V341.5 M55.5 334.6V340.9 M56 333.7V344.3 M56.5 335.2V341.6 M57 334.2V340.9 M57.5 335.3V339.8 M58 335.7V341 M58.5 334.1V341.7 M59 335.8V339.8 M59.5 333.8V340.8 M60 333.7V341.9 M60.5 335V341.2 M61 335.3V343 M61.5 335.9V340.3 M62 332.1V341.7 M62.5 335.3V340.9 M63 334.1V341.6 M63.5 335.6V340.6 M64 335.2V340.6 M64.5 335.5V341.1 M65 334.4V342.2 M65.5 335V342.2 M66 334.6V341.1 M66.5 334.7V339.9 M67 334.5V342.4 M67.5 334.5V341.2 M68 335.4V340.8 M68.5 333.5V340.2 M69 334.7V341.2 M69.5 333.9V340.3 M70 334.7V342.2 M70.5 334.8V341.8 M71 335.3V341.4 M71.5 334.6V340.2 M72 335.3V341.4 M72.5 335.4V340.8 M73 333.5V340.5 M73.5 334.5V341.5 M74 335.5V341.1 M74.5 334.6V340.1 M75 335.5V339.8 M75.5 334.2V341.9 M76 334.9V341.7 M76.5 334.9V339.7 M77 334.5V341.1 M77.5 335.6V341.3 M78 333.4V339.9 M78.5 333.5V342.6 M79 333.7V340.4 M79.5 335.4V340.3 M80 334.9V341.2 M80.5 334.4V341.2 M81 335.8V340.8 M81.5 334.2V340.4 M82 334.7V341.2 M82.5 333.8V341.2 M83 334.6V340.7 M83.5 334.8V340.8 M84 334.5V340.5 M84.5 334.5V341.5 M85 333.5V340.8 M85.5 334.6V342.9 M86 334.7V341 M86.5 335.5V341.8 M87 334.7V341.1 M87.5 335.5V340.9 M88 334.4V341.1 M88.5 335.1V341.4 M89 334.9V340.8 M89.5 335V342.8 M90 333.7V342.9 M90.5 335V340.6 M91 334.2V342.2 M91.5 335.7V341 M92 334.7V341.6 M92.5 335.6V341.4 M93 335V340.4 M93.5 334.2V342.7 M94 335V339.9 M94.5 334.7V341.4 M95 335.6V341.6 M95.5 334.4V340.7 M96 334.9V341.7 M96.5 334.6V340.3 M97 335.1V340.6 M97.5 334.8V341.5 M98 334.5V341.5 M98.5 333.9V341.5 M99 335V341.6 M99.5 333.9V340.2 M100 333.6V340.6 M100.5 335.5V341.7 M101 335.1V341.4 M101.5 336V342.2 M102 334.1V342.6 M102.5 336.1V340.5 M103 333.5V341.4 M103.5 335.5V341 M104 334.2V340.8 M104.5 333.3V345.9 M105 334.1V340.4 M105.5 335.3V341.7 M106 333.9V341.7 M106.5 334.7V340.8 M107 333.8V340.3 M107.5 334.9V341.9 M108 335.4V339.9 M108.5 333.9V341.2 M109 335.5V339.5 M109.5 335.4V342.2 M110 334V341.7 M110.5 331.9V341.3 M111 335.8V341.1 M111.5 333.2V341.9 M112 333.5V342.2 M112.5 333.2V341.8 M113 334.8V341.4 M113.5 336V341 M114 333V340.6 M114.5 334.2V341.4 M115 335.1V341.7 M115.5 336.1V340.9 M116 333.4V341.6 M116.5 334.7V341.3 M117 333.4V341.4 M117.5 333.7V341.6 M118 333.3V341.7 M118.5 334.4V341.8 M119 334.2V341.9 M119.5 332.2V342.1 M120 331.8V344 M120.5 325.6V342.3 M121 331.1V341.5 M121.5 334.3V341.4 M122 329.7V341.3 M122.5 329.9V342.8 M123 329.6V343.1 M123.5 329.2V343.1 M124 334.1V343.2 M124.5 329.2V341.5 M125 329.6V341.5 M125.5 329.9V342.1 M126 327.2V342.7 M126.5 332.9V343.5 M127 333.8V341.9 M127.5 334.3V341.5 M128 334.5V341.7 M128.5 333.8V342.1 M129 332.6V341.5 M129.5 332.9V341.6 M130 333.3V341.2 M130.5 333.7V341.3 M131 334.6V341.3 M131.5 334.4V341.3 M132 333.4V341.7 M132.5 334.6V340.3 M133 333.5V340.7 M133.5 335.1V340.4 M134 335.2V340.3 M134.5 333.9V341.5 M135 334.2V341.7 M135.5 335.1V341.3 M136 332.1V341.1 M136.5 335.5V340.1 M137 334.7V341.5 M137.5 334.5V342.1 M138 334.1V342 M138.5 336.4V340.5 M139 334.7V340.8 M139.5 333.7V342.1 M140 335.1V342 M140.5 334.8V340.6 M141 334.4V339.8 M141.5 334.6V342.7 M142 335.8V342 M142.5 334V341.4 M143 334.4V341.3 M143.5 334.8V341.4 M144 334.8V341.4 M144.5 333.9V341.4 M145 332.8V341.5 M145.5 332.3V342.1 M146 333.4V342.3 M146.5 333.2V342.4 M147 334.2V342.6 M147.5 333V341.6 M148 334.3V342.3 M148.5 334.2V341.9 M149 334V342.1 M149.5 332.6V343.5 M150 330.7V343.7 M150.5 331.3V341.6 M151 334.4V341.8 M151.5 332.4V343.2 M152 333.6V343 M152.5 333.6V342 M153 334.6V342.6 M153.5 333.1V341.8 M154 334.8V341.3 M154.5 332.3V341.5 M155 332.8V341.6 M155.5 333.3V341.7 M156 334.7V341.6 M156.5 334.6V341.2 M157 334V342.1 M157.5 329.6V339.6 M158 335.9V341 M158.5 334.6V341.7 M159 333.9V342.9 M159.5 334.4V343.8 M160 334.1V341.8 M160.5 332.7V341.6 M161 332.2V347.8 M161.5 333.1V342.7 M162 331.4V349.2 M162.5 330.9V348.9 M163 330.5V349.8 M163.5 332.3V343.9 M164 332.3V351.5 M164.5 332.3V352.6 M165 331.8V353.2 M165.5 329.2V353.6 M166 329.7V356.3 M166.5 332.2V350.6 M167 328.5V341.6 M167.5 333.8V348.9 M168 331.4V348.1 M168.5 331.8V344.2 M169 333.7V341.9 M169.5 332.7V342.4 M170 334.6V345 M170.5 334.1V342.3 M171 333.9V341.3 M171.5 334.4V343.1 M172 335V341.6 M172.5 334.3V341.5 M173 334.6V341.3 M173.5 334V339.7 M174 335.2V340.6 M174.5 336.4V341.6 M175 333.1V340.5 M175.5 334.7V341.2 M176 334.8V341.4 M176.5 334.4V341.2 M177 334.1V341.7 M177.5 334.7V341.5 M178 334.7V341.9 M178.5 332.1V341.5 M179 334.7V343.2 M179.5 333.4V342.3 M180 331.4V342.4 M180.5 331V342.6 M181 332.4V342.1 M181.5 332.7V342.1 M182 330V342.1 M182.5 329.6V342 M183 332.3V342.2 M183.5 333.2V341.8 M184 330V342.9 M184.5 334.4V341.7 M185 334.8V341.5 M185.5 331V341.6 M186 333.4V342.4 M186.5 331.7V342.3 M187 331.7V341.4 M187.5 334.7V341.6 M188 332.7V341.6 M188.5 333.1V341.2 M189 334.2V341.7 M189.5 334.7V341.6 M190 334.1V341.2 M190.5 334.7V341.2 M191 335.4V341.4 M191.5 335.1V340.9 M192 333.8V341.9 M192.5 334.9V343.6 M193 334V340.6 M193.5 333.7V340.3 M194 334.6V340.9 M194.5 333.3V340.3 M195 333.6V341.5 M195.5 334.6V341.5 M196 335.2V342.6 M196.5 334.6V341 M197 335.4V340.1 M197.5 334.2V340.6 M198 334.3V340.4 M198.5 336V340.6 M199 334.9V341.7 M199.5 334.4V340 M200 334.6V342 M200.5 335V345.6 M201 334.8V341.8 M201.5 333.7V341.9 M202 335.2V340.4 M202.5 334.5V342.4 M203 335.9V342.6 M203.5 334V340.7 M204 335.5V341.5 M204.5 334.5V341.6 M205 334.2V340.6 M205.5 334.5V339.6 M206 335.6V340.1 M206.5 335.1V341.3 M207 333.8V340.9 M207.5 335.4V340.8 M208 333.6V340.4 M208.5 335V339.8 M209 334.7V340.2 M209.5 335.2V341.1 M210 335.8V339.6 M210.5 333.4V342 M211 334.9V342.4 M211.5 334.2V341.2 M212 335.4V342.1 M212.5 335.5V342 M213 332.7V340.8 M213.5 334.4V341.4 M214 333.6V341.2 M214.5 334.7V342.5 M215 335.1V341 M215.5 334.6V340.5 M216 334.6V343.4 M216.5 334.7V341.5 M217 335.1V340.5 M217.5 334.7V341.3 M218 334.6V341.4 M218.5 334.6V341.3 M219 334.5V341.4 M219.5 334.2V341.8 M220 334.5V341.6 M220.5 334.6V341.2 M221 334.5V342.2 M221.5 333.7V341.8 M222 333.6V341.9 M222.5 334.2V341.2 M223 333.3V341.3 M223.5 334.8V341.7 M224 333.1V342.1 M224.5 333.8V341.4 M225 332.8V343.2 M225.5 332.9V343.1 M226 334.8V341.9 M226.5 334.3V342.8 M227 333.3V341.4 M227.5 333.4V341.5 M228 333.6V342.4 M228.5 334.7V341.2 M229 334.4V341.2 M229.5 334.4V341.3 M230 334.1V341.2 M230.5 334V341.4 M231 334.3V341.7 M231.5 334.8V341.4 M232 334.6V341.3 M232.5 334.8V341.3 M233 334.4V339.6 M233.5 334.9V341.1 M234 334.7V340.6 M234.5 334.5V342 M235 335V341.2 M235.5 334.3V341.9 M236 333.4V341.3 M236.5 335.4V342.3 M237 335.9V341 M237.5 335.3V342.5 M238 335.6V341.4 M238.5 335.8V341.6 M239 335.3V340.7 M239.5 334.4V341.4 M240 335.1V341.9 M240.5 335.3V341.4 M241 334.4V341 M241.5 334.8V341.3 M242 329.8V341.1 M242.5 335.9V339.9 M243 334.5V342.3 M243.5 336.5V341.6 M244 334.5V340.3 M244.5 334.4V344.4 M245 334.5V340.4 M245.5 335V342.7 M246 335.1V341.1 M246.5 329.3V341 M247 334.5V340.3 M247.5 335.7V342.6 M248 334.7V341 M248.5 335.1V342.4 M249 335.5V340.5 M249.5 334.4V340.5 M250 333.4V341.4 M250.5 334.8V342.1 M251 335.6V339.8 M251.5 334.5V341 M252 334.2V341.1 M252.5 334.5V339.9 M253 334.8V341.3 M253.5 335.1V340.4 M254 334.7V340.8 M254.5 334.9V341 M255 335.8V341.6 M255.5 335.1V342 M256 334.6V340 M256.5 333.6V340.8 M257 335.3V340.5 M257.5 334.8V340.2 M258 335.4V341.3 M258.5 333.5V341.9 M259 334.8V341.4 M259.5 334.9V340.9 M260 334.9V341.1 M260.5 335.1V341.4 M261 334.8V341.6 M261.5 333.9V341.8 M262 334.9V343.8 M262.5 334.9V341.9 M263 333.7V341 M263.5 335.1V341.2 M264 333.5V341.3 M264.5 334.6V340.4 M265 334.4V340.5 M265.5 333.3V340.9 M266 334.5V341.5 M266.5 334.5V342 M267 332.5V345.8 M267.5 335.8V341.5 M268 334.3V340.7 M268.5 334.4V341.2 M269 334.1V342.5 M269.5 333.7V342.1 M270 336.2V340.2 M270.5 334.8V341 M271 335.3V340.5 M271.5 334.3V341.4 M272 334.8V342.5 M272.5 335.7V344.1 M273 333.8V340.3 M273.5 335.9V341.1 M274 330V341.1 M274.5 331V342.1 M275 335.3V341.8 M275.5 335.8V341.3 M276 333.6V340.9 M276.5 334.2V340.9 M277 334.9V341.9 M277.5 334.7V341.3 M278 334.7V341.5 M278.5 335.1V341.9 M279 334.6V340.4 M279.5 336.1V341.4 M280 334.1V341.5 M280.5 335.5V340.6 M281 333.9V342.1 M281.5 333.8V342.8 M282 335.3V341.3 M282.5 335.6V341 M283 335.3V341.6 M283.5 333.9V340.7 M284 335.1V341 M284.5 334V340.5 M285 334.8V341.9 M285.5 335.1V341.2 M286 335.4V340.9 M286.5 335V340.1 M287 334.1V342.5 M287.5 335.8V342.7 M288 334.7V340.5 M288.5 334.8V342 M289 335.9V340.6 M289.5 335V341.3 M290 334.3V341.7 M290.5 331.3V340.8 M291 334.6V341.3 M291.5 334.7V341.2 M292 334.4V341.3 M292.5 334.6V341.7 M293 334.2V341.5 M293.5 334.1V341.4 M294 333.5V341.6 M294.5 334.6V341.7 M295 333.8V342.2 M295.5 333.7V342.3 M296 333.6V341.4 M296.5 334.1V342.5 M297 334.6V341.8 M297.5 334.8V341.7 M298 332.9V342.8 M298.5 333.2V342.9 M299 333V343 M299.5 333.9V341.5 M300 333.6V341.2 M300.5 334.2V341.2 M301 334.3V343 M301.5 334.5V341.2 M302 334.3V342.1 M302.5 330.8V341.3 M303 334.5V341.9 M303.5 334.3V343.4 M304 334.2V342.4 M304.5 334.4V341.6 M305 331.7V341.6 M305.5 334.5V341.5 M306 333.1V341.7 M306.5 334.7V341.4 M307 334.2V341.2 M307.5 332.3V341.3 M308 334.7V341.6 M308.5 334.5V341.3 M309 334.8V341.3 M309.5 332.4V342 M310 334V345.7 M310.5 335V341.5 M311 333.6V341 M311.5 334.6V341 M312 335.1V340.6 M312.5 330.9V340.2 M313 334.8V340.7 M313.5 334.1V340.8 M314 333.9V341.1 M314.5 333.3V340.9 M315 335.8V343.1 M315.5 334.9V340.4 M316 335.2V341.2 M316.5 335.3V342.1 M317 335.7V340.6 M317.5 335.6V341.4 M318 334.6V341.9 M318.5 335.2V340.3 M319 334.2V340.6 M319.5 334.6V341.3 M320 334.3V341.5 M320.5 331.2V341.9 M321 335.4V342.4 M321.5 334.7V341 M322 334.1V341 M322.5 335.4V341.1 M323 336V341.2 M323.5 334.4V341.9 M324 335.1V341.3 M324.5 334.2V341.5 M325 334.3V340.8 M325.5 333.9V342.9 M326 333.3V340.9 M326.5 334.7V341.2 M327 335V340.8 M327.5 334.7V342.6 M328 334.4V341.7 M328.5 333.5V340.8 M329 335.2V340.8 M329.5 335V340.8 M330 334.4V341.4 M330.5 334.4V340.8 M331 335.2V341.9 M331.5 334.3V341.8 M332 334.7V341.7 M332.5 334.2V341 M333 333.3V341 M333.5 335.9V342.3 M334 335.5V341.2 M334.5 335.1V345.3 M335 334V340.3 M335.5 334.7V340.8 M336 335.4V341.4 M336.5 334.9V341.6 M337 333.9V341.7 M337.5 333.8V342.1 M338 334.6V341.6 M338.5 335.2V341.3 M339 334.9V341.7 M339.5 335.1V339.9 M340 335V340.9 M340.5 333.9V341.6 M341 335V341.5 M341.5 334.4V341.8 M342 334.7V340.8 M342.5 335.5V341 M343 334.9V342 M343.5 334.4V340.5 M344 333.9V341.8 M344.5 333.8V341.5 M345 334.1V341.2 M345.5 335.1V342.2 M346 334.9V341.2 M346.5 334.3V339.9 M347 337.4V341.4 M347.5 334.5V341.7 M348 334.9V340.1 M348.5 334.2V341 M349 335.3V341.3 M349.5 333.1V341.4 M350 334.2V341.6 M350.5 334.3V341.2 M351 334.8V341 M351.5 333.1V342.1 M352 333.6V340.4 M352.5 334.4V342.5 M353 334.7V341.3 M353.5 336V340.9 M354 335.6V339.7 M354.5 333.9V341.3 M355 333.9V341.1 M355.5 334.6V342.7 M356 334.3V340.6 M356.5 333.6V341.6 M357 333.5V342.6 M357.5 333.9V341.1 M358 334.7V340.5 M358.5 335.7V340.2 M359 334.7V341.4 M359.5 334.5V340.7 M360 336.1V340.4 M360.5 334.3V341.5 M361 334.9V340.2 M361.5 335V341.5 M362 334.7V340.8 M362.5 334.1V342.6 M363 333.9V341.6 M363.5 333.9V340.4 M364 335.5V340.3 M364.5 335.5V340.2 M365 334.8V340.4 M365.5 334.3V341.6 M366 333.8V342.8 M366.5 334.1V340.8 M367 334.1V341.3 M367.5 334.2V341.4 M368 335V341.3 M368.5 334.1V341.2 M369 334.8V341.4 M369.5 334.6V341.9 M370 334.5V340.9 M370.5 334.7V339.9 M371 333.9V341.6 M371.5 334.6V340.7 M372 335.4V340.8 M372.5 333.7V341 M373 335.8V341.1 M373.5 336.5V342.3 M374 334.3V341.1 M374.5 334.2V340.6 M375 333.3V341.2 M375.5 334.9V340.2 M376 333.9V341 M376.5 333.9V341.5 M377 333.9V340.1 M377.5 334.7V341.9 M378 335.4V341.5 M378.5 335.4V341.8 M379 335.9V340.3 M379.5 334.5V340.6 M380 334.5V341.6 M380.5 335.8V341.4 M381 334.8V341.6 M381.5 335.9V342 M382 334.5V341.3 M382.5 334.6V342.2 M383 335.4V340.3 M383.5 333.1V339.9 M384 335V340.5 M384.5 333.7V340 M385 334.1V341.1 M385.5 334.2V341.8 M386 333V342.2 M386.5 335.3V344.9 M387 334.3V341.6 M387.5 334.8V341.8 M388 336.3V340.4 M388.5 332.4V341.6 M389 335.3V340.9 M389.5 335.1V341.5 M390 334.9V340.7 M390.5 334.1V342.1 M391 334.9V340.6 M391.5 334.8V340.7 M392 334.8V341.2 M392.5 332.2V339.5 M393 335.4V340.8 M393.5 335.5V342.1 M394 335.2V341.8 M394.5 333.7V341.6 M395 334.8V341.7 M395.5 335.3V340.2 M396 335.4V342.2 M396.5 335.3V342 M397 328.7V340.5 M397.5 335.4V341.5 M398 335.3V340.2 M398.5 335.4V341.4 M399 330.7V341.1 M399.5 333.6V342 M400 334.8V341.8 M400.5 334.8V341.1 M401 334.4V341 M401.5 335.6V341.5 M402 333.2V340 M402.5 334.8V342.2 M403 333.8V341.2 M403.5 335.7V340.8 M404 334.6V342.2 M404.5 335.2V340.1 M405 334.8V340.8 M405.5 334.4V341.3 M406 334.4V340.7 M406.5 334.5V342.3 M407 335.7V340 M407.5 334.8V340.2 M408 334.6V340.9 M408.5 335.6V341.3 M409 334.3V341.6 M409.5 335.3V340.1 M410 332.6V342.4 M410.5 333.8V340.4 M411 334.7V341.5 M411.5 335.5V340.3 M412 333.3V341.3 M412.5 334.2V340.9 M413 335.1V340.7 M413.5 334.7V341.2 M414 333.5V341.1 M414.5 334.5V341.8 M415 335V341.4 M415.5 335.2V341.8 M416 334V341.4 M416.5 335.2V340.8 M417 335.8V341.5 M417.5 331.8V342.1 M418 335.6V341.5 M418.5 334.8V341.5 M419 332.6V341 M419.5 334.9V340.7 M420 333.7V339.7 M420.5 335.5V341.2 M421 335.2V341.7 M421.5 334.9V342.9 M422 334.5V341.6 M422.5 334.1V340.5 M423 333.1V341.6 M423.5 334.8V340.9 M424 335.8V340.8 M424.5 334.8V340 M425 334.7V340.1 M425.5 335.7V340.8 M426 334.1V341.4 M426.5 334.6V341.1 M427 334.7V340.7 M427.5 333.2V341.1 M428 335.1V341.4 M428.5 335.3V341.8 M429 335V341.1 M429.5 335V340.5 M430 334.5V339.5 M430.5 336V341.6 M431 334V341 M431.5 334.8V341.6 M432 333.3V341.1 M432.5 335.8V342.2 M433 335.8V341.2 M433.5 334.7V340.8 M434 333.4V341.7 M434.5 333.9V341.9 M435 335.1V341.1 M435.5 335V341.4 M436 334.1V341.5 M436.5 335.1V341.6 M437 334.6V341.3 M437.5 334.4V341.8 M438 334.5V341.8 M438.5 335.1V340.4 M439 333.5V341.7 M439.5 334.9V341.6 M440 335.3V341.7 M440.5 334.1V340.8 M441 335V342.1 M441.5 334.5V342.4 M442 335.1V341.2 M442.5 335.3V341.5 M443 334.9V340.9 M443.5 335.5V341.3 M444 335.5V341.1 M444.5 334.3V341.7 M445 334.8V341.1 M445.5 335.4V340.8 M446 334.5V340.8 M446.5 329.3V343.3 M447 333.3V342.6 M447.5 334.8V341.2 M448 334.6V341.5 M448.5 334.4V341.3 M449 328.7V341.6 M449.5 334.2V342 M450 333.8V342.1 M450.5 334.4V341.6 M451 333.8V342.4 M451.5 333.7V342 M452 334.2V342.8 M452.5 333.4V342.9 M453 333.3V343.1 M453.5 333.2V342.3 M454 333.1V344.1 M454.5 334.4V341.4 M455 334.6V345.7 M455.5 334.3V345.7 M456 334.4V341.3 M456.5 334V343.5 M457 334V341.7 M457.5 334.8V342.9 M458 334.8V341.4 M458.5 334.1V342 M459 333.8V341.2 M459.5 333.9V341.4 M460 334.6V341.4 M460.5 334.5V341.6 M461 334.6V341.8 M461.5 334.6V342.4 M462 334.9V346.2 M462.5 335.9V347.1 M463 327.5V350.8 M463.5 336.5V348.3 M464 334.6V349.8 M464.5 336.6V341.3 M465 332.4V338.6 M465.5 329.3V343 M466 328.9V350.5 M466.5 330.9V346.2 M467 326.9V344.4 M467.5 327.7V348.5 M468 337.3V344.2 M468.5 328.8V340 M469 327.8V350.1 M469.5 328.5V349.2 M470 329.8V349.2 M470.5 330.9V345.4 M471 328.9V346 M471.5 332.4V343.7 M472 331.2V345.1 M472.5 328.5V348.9 M473 328.2V349.4 M473.5 331.9V344.9 M474 327.9V342.5 M474.5 328.9V346.5 M475 329.1V348.1 M475.5 329.1V343.3 M476 336.8V350.2 M476.5 327.4V346.3 M477 329.1V341 M477.5 330.9V347.1 M478 328.8V343 M478.5 335.3V350.1 M479 327.7V342.4 M479.5 327.9V348.9 M480 333.9V348.9 M480.5 331.6V344.4 M481 334.2V347 M481.5 329.5V346.2 M482 335.1V348.7 M482.5 332.2V343.5 M483 329.2V342.5 M483.5 327.1V347.4 M484 328V344.4 M484.5 331.1V343.3 M485 333V345.2 M485.5 328V346.1 M486 327.6V341.3 M486.5 332.5V339.7 M487 327V340.3 M487.5 330V347.6 M488 333.5V349.9 M488.5 326.5V343.1 M489 334.4V347.3 M489.5 330.2V346.9 M490 329.3V349.7 M490.5 328V344 M491 328.2V345.4 M491.5 326.5V345.7 M492 337.2V349.3 M492.5 332.6V348.6 M493 329.3V348 M493.5 328.2V349.2 M494 327.5V347.1 M494.5 332V345.8 M495 332.5V344.2 M495.5 330.6V345.1 M496 332.4V343.8 M496.5 332.1V342.4 M497 329.5V340.8 M497.5 332.9V342.1 M498 328.4V343.5 M498.5 335V348.4 M499 330.8V348.3 M499.5 332V344.2 M500 329.6V340.4 M500.5 326.3V341.5 M501 326.7V347.1 M501.5 327.9V342.6 M502 326.9V346 M502.5 331V342.3 M503 333.9V348.6 M503.5 326.3V344.8 M504 328.1V347.3 M504.5 330.1V345.4 M505 329.6V344.1 M505.5 327.8V344.9 M506 329.8V342.3 M506.5 325.6V340.6 M507 327.5V347.5 M507.5 331.1V350.2 M508 336.2V343.8 M508.5 331V347.8 M509 328.1V348.5 M509.5 325.4V339.2 M510 328.1V345.7 M510.5 326.6V347.1 M511 330.4V338.7 M511.5 330.8V346.5 M512 330.3V345.8 M512.5 326.4V345.3 M513 324.2V345.8 M513.5 328.7V346.8 M514 323.3V348.8 M514.5 322.5V338.6 M515 322.4V343.6 M515.5 322.9V340.3 M516 323.3V349.8 M516.5 325.1V347 M517 328.8V343.3 M517.5 333V350.4 M518 329.4V340 M518.5 332.3V343.9 M519 331.8V348.8 M519.5 322.3V350.7 M520 324V342.6 M520.5 324.5V354.6 M521 321.2V353 M521.5 325.5V356.3 M522 333V354.5 M522.5 324.3V353.6 M523 329.1V342.1 M523.5 333V352.8 M524 330V356.1 M524.5 333.5V354.4 M525 328.1V346.9 M525.5 331.3V347.9 M526 329.8V345.5 M526.5 332.1V355.9 M527 329.4V351.7 M527.5 326.5V347.3 M528 324.6V346.6 M528.5 332.9V340.7 M529 332.1V341.1 M529.5 328.3V349.3 M530 336.7V352.5 M530.5 328V348 M531 326.6V347.2 M531.5 334V349 M532 327.3V340.2 M532.5 330.7V342.9 M533 327.6V340.9 M533.5 328.2V342.7 M534 329.4V347.6 M534.5 328.5V340.1 M535 330.7V341.5 M535.5 334.7V342 M536 334.4V349.5 M536.5 329.9V343.3 M537 330.6V340.1 M537.5 333.4V347.1 M538 328.7V347 M538.5 326.5V349.9 M539 327.6V345.6 M539.5 328.1V343.2 M540 327.3V343.1 M540.5 326.3V338.9 M541 327.7V345.9 M541.5 327.5V346.1 M542 327.3V347.8 M542.5 328.9V349.6 M543 334.7V349.5 M543.5 329.3V348 M544 327.3V345.2 M544.5 328.2V350.7 M545 328.1V350.5 M545.5 337.1V347.7 M546 324.6V345.9 M546.5 334.1V350.3 M547 322.5V346.1 M547.5 333.2V351.2 M548 320.8V351.5 M548.5 320.1V344.8 M549 322.6V347.7 M549.5 326.3V347.1 M550 321.6V353.6 M550.5 324.6V346.7 M551 322V350.1 M551.5 325.5V350.4 M552 321.2V351.7 M552.5 330.6V350.8 M553 325V353.4 M553.5 321.4V352.8 M554 318.3V344.7 M554.5 333.3V352.5 M555 334.2V354.7 M555.5 321.1V348.4 M556 321.7V343.2 M556.5 322.5V354.8 M557 337.9V355.1 M557.5 328.4V348.3 M558 319.7V353.7 M558.5 327.6V355.9 M559 335.7V352.2 M559.5 326.3V355 M560 336.4V347.3 M560.5 327.4V341.9 M561 325.7V354.8 M561.5 323.4V343.8 M562 328V356.6 M562.5 335V353.3 M563 331.4V355.9 M563.5 328.2V354.9 M564 335.9V350.6 M564.5 331.2V342.2 M565 331.8V350.5 M565.5 330.9V348.2 M566 333.8V346.7 M566.5 332.5V350.3 M567 329.7V345.9 M567.5 332.1V344.2 M568 331.6V341.8 M568.5 329.2V345.6 M569 337.5V344.2 M569.5 329.3V344.4 M570 333V350.7 M570.5 330.3V345 M571 335V345.3 M571.5 333.1V350 M572 331.9V350.2 M572.5 329.2V349.8 M573 332.8V345.3 M573.5 331.8V348.1 M574 330V349.3 M574.5 333.6V348.6 M575 333.1V348.9 M575.5 337.3V349.5 M576 330.9V342 M576.5 334.2V344.3 M577 332.1V349.9 M577.5 329.4V347.3 M578 335.7V350.5 M578.5 329.4V340.9 M579 331.1V347.9 M579.5 331.2V348.4 M580 337.6V344.2 M580.5 333.5V347.7 M581 335.9V343.8 M581.5 334.9V340 M582 332.4V342.8 M582.5 331.7V343 M583 328.6V341.5 M583.5 327.8V348.4 M584 333.7V345.6 M584.5 330.7V346.5 M585 327.7V339.1 M585.5 331.8V341.6 M586 334.5V341.1 M586.5 335.3V341.3 M587 334.6V341.8 M587.5 335.1V341.7 M588 334.2V339.4 M588.5 334.7V341.9 M589 336.3V341.7 M589.5 335V341.4 M590 333.7V341 M590.5 334.7V340.8 M591 335.8V341.6 M591.5 335.2V343.1 M592 335.3V341.5 M592.5 335.1V340.8 M593 334.7V341.2 M593.5 334.5V340.7 M594 334.7V342.1 M594.5 335.8V340.6 M595 336.4V341.9 M595.5 334.2V341.5 M596 334.8V341.3 M596.5 334.9V341.1 M597 334.5V341.9 M597.5 334.7V340 M598 334V340.1 M598.5 334.1V341 M599 333.9V341.3 M599.5 333.1V342.4 M600 334.1V341.5 M600.5 331.7V342 M601 333.8V341.4 M601.5 335.2V341.3 M602 334.4V341.1 M602.5 334.3V341 M603 335.1V341.9 M603.5 334.8V341.1 M604 335.6V341.9 M604.5 335.4V342.4 M605 334.9V341.3 M605.5 335.3V340.7 M606 334.4V341 M606.5 334.8V341.1 M607 334.3V342.5 M607.5 335.6V340.8 M608 334.6V340.5 M608.5 334.2V342 M609 335.9V340.8 M609.5 334.9V341.8 M610 334.3V342.1 M610.5 334.7V341.1 M611 335.4V340.8 M611.5 335V342.1 M612 335.1V340.7 M612.5 335V341.6 M613 335V340.6 M613.5 333.8V342.1 M614 335.2V341.4 M614.5 335.2V341.7 M615 334.6V341.1 M615.5 334.2V342.8 M616 335V340.7 M616.5 335.2V345.6 M617 336.2V341.3 M617.5 335.3V341.9 M618 334.9V340.2 M618.5 334.5V341 M619 335.3V341.7 M619.5 335.3V341 M620 333.4V341.3 M620.5 335V341.5 M621 334.9V341.3 M621.5 334.9V342.2 M622 335.1V341 M622.5 334.4V342.3 M623 334.2V341.5 M623.5 334.2V341 M624 334.9V341.1 M624.5 334.8V341.3 M625 334.1V340.9 M625.5 336V340.9 M626 335.2V340.7 M626.5 335.5V340.1 M627 334.9V341.6 M627.5 333.7V341.6 M628 334.7V340.4 M628.5 335.4V341.5 M629 335.6V339.7 M629.5 333.4V341.1 M630 333.7V343 M630.5 335.6V342.2 M631 337V342.7 M631.5 335.5V340.9 M632 334.7V343.9 M632.5 334.3V341.1 M633 334.3V341.1 M633.5 333.8V341.6 M634 334.5V341 M634.5 333.5V341.5 M635 334.5V340.2 M635.5 336.2V340.9 M636 334.4V340.6 M636.5 334.9V341 M637 334.1V340.1 M637.5 335.9V341.1 M638 335.7V341.8 M638.5 336.6V340.7 M639 334.7V341.3 M639.5 333.9V339.8 M640 335V340.3 M640.5 333.8V340.9 M641 335.7V341.1 M641.5 335V343 M642 335.3V341.7 M642.5 334.7V341.2 M643 334.8V340.9 M643.5 335.2V340.9 M644 333V340.3 M644.5 334.5V340.4 M645 332.8V342.4 M645.5 335.5V341.9 M646 333.1V340.7 M646.5 333.9V341.5 M647 335.5V340 M647.5 334.6V341.9 M648 334.7V342.5 M648.5 335.6V341.7 M649 334.3V340.9 M649.5 334.7V341.8 M650 334.5V342.1 M650.5 335.8V339.5 M651 334.5V341.3 M651.5 333.9V341.8 M652 335.2V341.1 M652.5 335.8V343.7 M653 333.6V341.6 M653.5 334V340.4 M654 333.9V340.4 M654.5 333.4V340.7 M655 334.7V341.9 M655.5 333.7V341.1 M656 334.5V340.4 M656.5 334.8V341.2 M657 334.4V341.6 M657.5 334.4V343 M658 334.3V343.1 M658.5 334.7V341.1 M659 334.8V341.9 M659.5 335.7V341.3 M660 334.3V341.1 M660.5 334.4V340.6 M661 334.4V341.4 M661.5 334.7V339.7 M662 334V340.8 M662.5 333.8V341.4 M663 335.9V341.4 M663.5 327.5V340.9 M664 334.9V340.5 M664.5 333.5V340.6 M665 335.8V340.6 M665.5 334.1V343.9 M666 333.5V339.2 M666.5 335.3V342.2 M667 335.1V342.2 M667.5 334.6V340.9 M668 334V341.6 M668.5 334.7V341.5 M669 335.1V342.2 M669.5 334.6V342 M670 335.2V342.1 M670.5 334.5V340.5 M671 335.7V341.7 M671.5 333.6V341.7 M672 334.6V340.8 M672.5 334.1V343.1 M673 334.5V342.6 M673.5 335V341.2 M674 333.9V340.2 M674.5 332.5V342 M675 335V341.3 M675.5 335.3V341.8 M676 335.4V343.1 M676.5 335V341.6 M677 334.9V341.9 M677.5 335.3V340.8 M678 333.8V340.3 M678.5 335.8V341.1 M679 334.5V342.2 M679.5 334.6V341.4 M680 334.7V340.7 M680.5 334.5V341.1 M681 334.2V341.4 M681.5 334.7V341.3 M682 334.7V341.6 M682.5 334.8V341.5 M683 334.4V341.8 M683.5 334.1V341.5 M684 334.5V342 M684.5 334.4V345.6 M685 334.7V342.2 M685.5 334.6V342.3 M686 334.8V341.7 M686.5 332.2V341.5 M687 334.5V341.7 M687.5 334.5V341.4 M688 333.2V341.5 M688.5 334.8V341.7 M689 333V343 M689.5 331V342 M690 332.8V343.2 M690.5 333.8V343.1 M691 332.5V342.2 M691.5 334.6V341.6 M692 334.7V342.8 M692.5 334.1V341.3 M693 334.3V343.5 M693.5 333.5V342.5 M694 334.3V341.9 M694.5 333.7V341.4 M695 334.4V341.3 M695.5 334.6V342.1 M696 334.5V341.4 M696.5 334.7V341.3 M697 334.8V341.2 M697.5 334.7V341.5 M698 331.8V341.6 M698.5 334.8V341.3 M699 334.6V341.2 M699.5 335.5V341.9 M700 332.5V342.2 M700.5 334.3V340.4 M701 335.2V341.6 M701.5 335.6V341 M702 335.4V342.5 M702.5 335.4V340.8 M703 334.3V341.3 M703.5 335.4V341.4 M704 335.6V342.6 M704.5 336.1V340.1 M705 333V342.2 M705.5 335.4V342.4 M706 334.6V340 M706.5 334.2V342.3 M707 335.1V341.9 M707.5 334.3V344.8 M708 334.3V341.6 M708.5 335.2V341.6 M709 335.8V341.8 M709.5 333.7V340.7 M710 335V341.4 M710.5 335.4V340.2 M711 333.2V342.4 M711.5 335.3V343.1 M712 335V341.7 M712.5 335.1V340.8 M713 333.9V342.1 M713.5 335.2V341.5 M714 334.3V341.2 M714.5 334.8V340.3 M715 334.2V342.1 M715.5 334.3V341 M716 335.1V342.3 M716.5 335V340.4 M717 332.9V339.8 M717.5 336.7V341.2 M718 336V341.5 M718.5 335.9V341.6 M719 334.6V340.3 M719.5 335.1V340.5 M720 333.5V343 M720.5 335.5V341.8 M721 333.4V342.5 M721.5 334V344.4 M722 333.7V342.3 M722.5 335.5V342.5 M723 332V341.9 M723.5 332.1V341.3 M724 334.8V341.3 M724.5 328.8V341.4 M725 336V341.2 M725.5 330.3V341.4 M726 334.9V341.3 M726.5 334.6V339.9 M727 330.3V342 M727.5 334.8V340 M728 336.1V340.5 M728.5 335.5V340.6 M729 334.3V341.1 M729.5 335.9V341.8 M730 333.5V341 M730.5 334V341.3 M731 335.1V341.6 M731.5 334.8V340.5 M732 335.8V341.2 M732.5 333.9V341.3 M733 333.3V342.2 M733.5 334V341.8 M734 335.4V341.3 M734.5 335.6V340.8 M735 334.7V341.3 M735.5 334.9V342.8 M736 336V341.5 M736.5 335.6V342 M737 335V341 M737.5 333.6V341.3 M738 335.7V340.5 M738.5 334V341.4 M739 334.9V340.8 M739.5 335V340.3 M740 335V340.6 M740.5 334.5V340.2 M741 334.7V341 M741.5 334.7V340.6 M742 335V341.1 M742.5 335.7V340.6 M743 335.7V342.5 M743.5 334.7V340.6 M744 334.7V342.3 M744.5 335.1V341.2 M745 334.4V341.6 M745.5 334.6V342.2 M746 334.2V340.7 M746.5 334.9V342 M747 333.6V342 M747.5 333.7V341.4 M748 335V341.7 M748.5 336.2V341.3 M749 333.8V341.3 M749.5 335.7V342.7 M750 334.3V341 M750.5 334.7V341.2 M751 334.6V341.4 M751.5 334.8V341.3 M752 334.7V341.4 M752.5 334.2V341.5 M753 334.8V341.3 M753.5 334.7V342.1 M754 334.5V342.2 M754.5 334.6V341.5 M755 334.3V342.4 M755.5 333.4V341.6 M756 334.4V342.9 M756.5 334.3V342.8 M757 333.1V341.2 M757.5 333.8V341.5 M758 334.5V343.2 M758.5 334.2V343.5 M759 332.6V343.4 M759.5 333.8V343.6 M760 334.5V342 M760.5 332.4V342.4 M761 334.6V341.9 M761.5 332.4V343.3 M762 332.8V343.2 M762.5 333.8V343.1 M763 332.8V342.9 M763.5 334.5V341.8 M764 333.3V341.5 M764.5 333.4V341.5 M765 328.8V342.4 M765.5 334.4V341.7 M766 333.8V342.2 M766.5 334.4V342.1 M767 333.8V341.4 M767.5 334.2V341.4 M768 334.5V341.4 M768.5 334.4V341.3 M769 334.8V341.3 M769.5 334.7V341.3 M770 335.3V340.4 M770.5 333.5V342.5 M771 336.4V342 M771.5 335.3V341.6 M772 334.7V342.2 M772.5 334V341.4 M773 334.3V341.6 M773.5 333.6V341.8 M774 334.6V340.1 M774.5 334.6V340.6 M775 334.7V341.4 M775.5 334.7V344.5 M776 335.4V343.1 M776.5 334.1V341.2 M777 334.7V340.4 M777.5 335.7V340.4 M778 334.4V341.3 M778.5 334.9V341.3 M779 334.2V342.5 M779.5 335.5V341.3 M780 335.1V341 M780.5 334V341.2 M781 336.2V341 M781.5 335.3V340 M782 333.2V341.7 M782.5 334.1V340.7 M783 334.1V342.3 M783.5 336.1V343.4 M784 335V339.5 M784.5 335.4V341 M785 335V341.7 M785.5 333.3V343.8 M786 334.3V341.8 M786.5 335.2V341.6 M787 333.1V339.6 M787.5 334.7V341.4 M788 333.7V341.3 M788.5 334.6V341.5 M789 333.6V342.1 M789.5 334.3V344.9 M790 335.5V341.7 M790.5 333.8V341.6 M791 333.3V340.8 M791.5 334.2V341.6 M792 334.9V341.3 M792.5 334.7V341.2 M793 334.4V341.3 M793.5 334.6V341.5 M794 334.1V341.5 M794.5 334.6V341.7 M795 334.7V342.3 M795.5 333.5V341.4 M796 333.3V342.1 M796.5 333.1V342.9 M797 332.9V343.1 M797.5 333.9V342.1 M798 332.6V342.4 M798.5 334.1V341.6 M799 332.2V343.8 M799.5 334.3V342 M800 331.8V342.8 M800.5 333.6V344 M801 332.2V342.3 M801.5 333.2V343.6 M802 332.6V343.4 M802.5 332.7V341.4 M803 333.7V343.1 M803.5 333.1V341.4 M804 333.3V341.8 M804.5 334V342.5 M805 333.7V341.3 M805.5 334.6V341.6 M806 334.1V341.2 M806.5 334.6V341.9 M807 334.6V345 M807.5 334.1V341.3 M808 333.9V341.3 M808.5 335.7V342.6 M809 327.3V341.1 M809.5 335.7V340.9 M810 335.6V341.1 M810.5 335.1V341.5 M811 333.6V339.8 M811.5 335.2V342.2 M812 334.4V341.7 M812.5 334.6V341 M813 334.9V340.6 M813.5 334.5V340.9 M814 334.3V341.8 M814.5 335.6V340.9 M815 335.3V341.2 M815.5 334.8V342.4 M816 333.7V341.5 M816.5 334.4V341.2 M817 335.2V340.5 M817.5 333.2V340.1 M818 334.6V341.3 M818.5 334.2V340.7 M819 334.7V340.8 M819.5 335.1V340.2 M820 334.3V341.3 M820.5 334.7V341.1 M821 334.1V342.4 M821.5 335.4V341.1 M822 334.3V340.5 M822.5 334.2V341.2 M823 333.6V341.3 M823.5 334.2V341.5 M824 332.3V341.6 M824.5 331.7V342.4 M825 331.1V341.6 M825.5 334.7V342.5 M826 332.1V341.5 M826.5 329.2V341.6 M827 334.4V345.1 M827.5 332.7V344.6 M828 327.3V343.4 M828.5 326.7V342.3 M829 326.1V343.8 M829.5 332.3V344 M830 324.8V342.4 M830.5 333V341.7 M831 331.4V341.5 M831.5 326.7V341.3 M832 327.3V343.4 M832.5 330.4V343.3 M833 333V343.1 M833.5 329.2V342 M834 329.8V342.7 M834.5 330.4V341.5 M835 333.8V342.3 M835.5 331.7V342.2 M836 333.5V341.3 M836.5 332.9V341.8 M837 334V341.4 M837.5 333.9V341.4 M838 335.3V342.3 M838.5 334.9V341.6 M839 335.4V341 M839.5 335.2V341.1 M840 336.1V341.9 M840.5 334.1V344 M841 333.7V342.6 M841.5 334.4V341.4 M842 335.5V342.5 M842.5 334.9V341 M843 334.7V340.2 M843.5 334.5V341.5 M844 334.2V340.7 M844.5 334.4V342.5 M845 334.6V341.4 M845.5 333.1V341.3 M846 334.5V342.2 M846.5 332.6V342.4 M847 332.2V342.1 M847.5 330.7V342.1 M848 334.4V342.1 M848.5 330.9V342 M849 330.4V343.7 M849.5 330V343.9 M850 333.4V342.6 M850.5 331.8V341.5 M851 329.8V342.1 M851.5 333V342.5 M852 332.9V345.2 M852.5 333.9V344.9 M853 328.7V344.7 M853.5 333.8V342 M854 329.6V344.2 M854.5 332.4V343.9 M855 334.6V341.7 M855.5 334.2V343.8 M856 334.2V343.2 M856.5 331.7V341.3 M857 332.2V342 M857.5 334.6V342.4 M858 333.8V342.2 M858.5 333.5V342.4 M859 334.4V346 M859.5 334.4V349.4 M860 335.7V343 M860.5 335.4V339.4 M861 335.2V340.7 M861.5 334.9V341.1 M862 335.7V342.3 M862.5 334.3V341.9 M863 335.2V341.5 M863.5 334.4V341.3 M864 334.5V342.2 M864.5 334.8V341.6 M865 334V343.7 M865.5 333.1V342.4 M866 332V342 M866.5 333.8V343.3 M867 332.3V344.6 M867.5 334.1V342.6 M868 331.5V345.1 M868.5 333.6V344.9 M869 330.6V345.4 M869.5 333.8V341.6 M870 334.3V341.6 M870.5 330.2V345.8 M871 331V345.4 M871.5 331.1V341.3 M872 331.5V344.5 M872.5 331.9V344.1 M873 332.3V343.7 M873.5 334V341.7 M874 333.1V342.9 M874.5 332.9V342.8 M875 332.6V342.7 M875.5 330.7V341.3 M876 334.4V341.3 M876.5 331.5V342.9 M877 333.9V341.4 M877.5 334.4V342.4 M878 329.5V342 M878.5 328.8V342.6 M879 333.8V344.5 M879.5 327.5V343.1 M880 326.8V342.9 M880.5 333.5V344.9 M881 328.1V344.5 M881.5 328.8V344.2 M882 334.1V341.3 M882.5 334.2V342.3 M883 330.8V341.5 M883.5 331.5V345.2 M884 334.6V342.5 M884.5 332.6V343 M885 334.5V343.5 M885.5 332.8V341.8 M886 333.8V342.4 M886.5 333V345.3 M887 334.5V344.1 M887.5 333.1V341.7 M888 333.9V347.7 M888.5 334.1V348.5 M889 332.3V344 M889.5 332.1V342.2 M890 333.2V350.9 M890.5 334.7V351.8 M891 331.3V352.6 M891.5 333.5V345 M892 331.7V354.2 M892.5 334.1V348 M893 331.3V352.6 M893.5 333.6V344.8 M894 333.3V350.9 M894.5 334.2V346 M895 334.1V349.3 M895.5 334.7V356.2 M896 334.2V342.5 M896.5 334.2V341.8 M897 334.7V342.4 M897.5 334.3V345.3 M898 333.8V342.5 M898.5 334.1V342.6 M899 334.5V341.5 M899.5 330.1V341.5 M900 334.2V340.7 M900.5 334.2V340.7 M901 334.6V340.6 M901.5 334.5V342.2 M902 335.4V340.3 M902.5 334.4V341.2 M903 334.5V341.3 M903.5 334.2V343 M904 334.7V341.8 M904.5 334.1V342.5 M905 333.7V342.9 M905.5 334.2V342.3 M906 334.3V341.4 M906.5 333.2V345.7 M907 334.5V346.2 M907.5 334.3V341.4 M908 333.5V347.2 M908.5 332.5V348.4 M909 334.6V342.9 M909.5 326.1V345.1 M910 332.3V349.2 M910.5 334.1V342.7 M911 334V343.1 M911.5 331.6V344.2 M912 334.8V343.3 M912.5 332.7V347.4 M913 332.8V346.2 M913.5 332.9V345.7 M914 333.6V345.2 M914.5 334V341.7 M915 332.6V342.5 M915.5 334.5V343.7 M916 334.3V341.6 M916.5 333.7V341.6" fill="none" stroke="#f5e926" stroke-width="1"/>
<path d="" stroke="#f3e82c" stroke-width="0.8" fill="none"/>
<path d="" stroke="#000" stroke-width="0.6" fill="none" opacity="0.6"/>
<!-- math -->
<path d="M9 493.3 L9.5 493.1 L10 493 L10.5 493.3 L11 493.3 L11.5 493.2 L12 492.7 L12.5 492.1 L13 493.6 L13.5 493.4 L14 493.1 L14.5 492.6 L15 492.5 L15.5 493.8 L16 492.8 L16.5 493.4 L17 493 L17.5 493.4 L18 493.1 L18.5 492.6 L19 492.6 L19.5 494.3 L20 494.3 L20.5 493.1 L21 492.9 L21.5 493.3 L22 493.1 L22.5 493.2 L23 493.1 L23.5 493 L24 493.8 L24.5 493.6 L25 493.6 L25.5 492.7 L26 491.2 L26.5 491.3 L27 493.3 L27.5 492.8 L28 491.8 L28.5 493.9 L29 489.7 L29.5 492.1 L30 493.4 L30.5 491.5 L31 493.3 L31.5 493.1 L32 493.4 L32.5 492.6 L33 493 L33.5 494.2 L34 493.9 L34.5 491.6 L35 492.8 L35.5 493.1 L36 492.6 L36.5 492 L37 493.6 L37.5 492.8 L38 494 L38.5 493.4 L39 493.7 L39.5 493 L40 492.7 L40.5 493 L41 494.1 L41.5 491.7 L42 493.3 L42.5 493.5 L43 493.1 L43.5 493.1 L44 492.9 L44.5 493.5 L45 493.7 L45.5 492.7 L46 493.9 L46.5 494.1 L47 493 L47.5 489.3 L48 492.7 L48.5 494.3 L49 492.5 L49.5 494.5 L50 494 L50.5 493.5 L51 493.4 L51.5 492.3 L52 493.2 L52.5 493 L53 493.2 L53.5 493 L54 490.9 L54.5 493 L55 492.8 L55.5 493 L56 492.5 L56.5 493.5 L57 493.2 L57.5 493 L58 492.1 L58.5 492.7 L59 492.8 L59.5 493.5 L60 492.8 L60.5 493.8 L61 493.9 L61.5 493.2 L62 493.7 L62.5 492.9 L63 492.6 L63.5 494.1 L64 493.7 L64.5 492.7 L65 494.7 L65.5 493.6 L66 493.5 L66.5 492.9 L67 493.5 L67.5 492.1 L68 494 L68.5 492.8 L69 491.8 L69.5 493.1 L70 490.7 L70.5 491.5 L71 492.9 L71.5 492.7 L72 493.7 L72.5 488.9 L73 492.7 L73.5 493.3 L74 493.3 L74.5 493 L75 493.3 L75.5 493.4 L76 493.7 L76.5 493.6 L77 493 L77.5 492.4 L78 494.7 L78.5 493.4 L79 493.2 L79.5 493.1 L80 492.7 L80.5 492.8 L81 492.7 L81.5 493.5 L82 492.5 L82.5 493.5 L83 492.7 L83.5 492.9 L84 493.4 L84.5 493.3 L85 493.7 L85.5 493.5 L86 493.1 L86.5 493.3 L87 493.7 L87.5 493.4 L88 493.8 L88.5 493 L89 493 L89.5 492.8 L90 493.8 L90.5 493.7 L91 492.9 L91.5 492.8 L92 493.9 L92.5 493.2 L93 493.1 L93.5 491.8 L94 490.3 L94.5 493.7 L95 490.9 L95.5 493.3 L96 493 L96.5 493.4 L97 492.9 L97.5 493.5 L98 492.7 L98.5 488.2 L99 493.2 L99.5 492.9 L100 493 L100.5 493.3 L101 493.2 L101.5 493.7 L102 493.5 L102.5 493.5 L103 492.7 L103.5 492.3 L104 492.6 L104.5 492.6 L105 493.8 L105.5 492.6 L106 492.9 L106.5 493.5 L107 493.3 L107.5 493.1 L108 493.3 L108.5 494 L109 493.5 L109.5 493.3 L110 494.3 L110.5 493.5 L111 493.6 L111.5 493.2 L112 492.7 L112.5 492.7 L113 493.8 L113.5 493.2 L114 493 L114.5 493.7 L115 492.7 L115.5 492.4 L116 490.4 L116.5 493.9 L117 492.4 L117.5 493.2 L118 490.7 L118.5 490.1 L119 493 L119.5 492.4 L120 493.3 L120.5 489.1 L121 493.5 L121.5 492 L122 492.4 L122.5 492.9 L123 492.9 L123.5 493.5 L124 493.8 L124.5 492.7 L125 493.1 L125.5 494 L126 493.2 L126.5 493.9 L127 493.2 L127.5 493.5 L128 493.2 L128.5 492.8 L129 493.1 L129.5 494.2 L130 492.6 L130.5 493.2 L131 490.1 L131.5 493.5 L132 493.8 L132.5 492.2 L133 494.1 L133.5 494.5 L134 489.8 L134.5 493.8 L135 494 L135.5 493.8 L136 490.2 L136.5 493.5 L137 493.2 L137.5 493.5 L138 493.8 L138.5 493.5 L139 492.4 L139.5 491.2 L140 493.6 L140.5 493.3 L141 493.4 L141.5 494.3 L142 492.7 L142.5 493.1 L143 493.6 L143.5 492.6 L144 493.3 L144.5 490.6 L145 492.9 L145.5 492.7 L146 492.8 L146.5 493.6 L147 494.4 L147.5 493.5 L148 492.9 L148.5 493.4 L149 492.6 L149.5 493.8 L150 493.3 L150.5 493.8 L151 493.9 L151.5 493.3 L152 493.7 L152.5 493 L153 491.8 L153.5 493.1 L154 490.1 L154.5 494.7 L155 493.7 L155.5 492.8 L156 492.5 L156.5 491.4 L157 490.4 L157.5 494 L158 492.6 L158.5 493.4 L159 493.2 L159.5 493.2 L160 493.7 L160.5 490.2 L161 492.8 L161.5 494.3 L162 494.5 L162.5 491.7 L163 492.2 L163.5 493.3 L164 493.2 L164.5 494 L165 493.3 L165.5 492.6 L166 493.3 L166.5 486.2 L167 493.2 L167.5 491.2 L168 494.1 L168.5 490.7 L169 493.6 L169.5 492.7 L170 494.5 L170.5 494.9 L171 493.3 L171.5 491.7 L172 492.8 L172.5 486.7 L173 493.6 L173.5 493.1 L174 494.2 L174.5 493.7 L175 494 L175.5 493.4 L176 493.9 L176.5 493.2 L177 493.6 L177.5 492.7 L178 493.9 L178.5 493.1 L179 493.3 L179.5 494 L180 493.1 L180.5 493.8 L181 493.8 L181.5 493.5 L182 493.3 L182.5 493.9 L183 492.7 L183.5 493.7 L184 493.2 L184.5 493.4 L185 493.4 L185.5 494.3 L186 491.4 L186.5 492.7 L187 493.4 L187.5 493 L188 493 L188.5 493.3 L189 493.7 L189.5 493.6 L190 492.8 L190.5 493.8 L191 493.8 L191.5 494.1 L192 492.3 L192.5 493.1 L193 493.4 L193.5 493.5 L194 493.7 L194.5 493 L195 493.7 L195.5 490.3 L196 493.7 L196.5 493.6 L197 493 L197.5 493.4 L198 492.6 L198.5 494.2 L199 493.2 L199.5 487.7 L200 493.6 L200.5 491.1 L201 492.7 L201.5 493.6 L202 493.7 L202.5 494.1 L203 491 L203.5 493.6 L204 492.2 L204.5 493.7 L205 492.6 L205.5 493 L206 492.7 L206.5 494 L207 492.8 L207.5 493.3 L208 492.9 L208.5 492.6 L209 492.9 L209.5 493 L210 493.2 L210.5 493.8 L211 493.7 L211.5 492.8 L212 493.2 L212.5 493.4 L213 493.3 L213.5 493.9 L214 493.8 L214.5 493.8 L215 492.5 L215.5 491.6 L216 494 L216.5 493 L217 492.9 L217.5 493.5 L218 492.8 L218.5 490.6 L219 494.3 L219.5 493.8 L220 493.7 L220.5 493 L221 492.3 L221.5 493.9 L222 493.5 L222.5 493.2 L223 492.2 L223.5 493.6 L224 493.1 L224.5 492.8 L225 493.7 L225.5 493.1 L226 492.5 L226.5 491.4 L227 492.7 L227.5 493.2 L228 493.4 L228.5 493 L229 493 L229.5 492.9 L230 493 L230.5 492.9 L231 492.8 L231.5 494.5 L232 494.1 L232.5 493.6 L233 494.1 L233.5 493.1 L234 491.6 L234.5 493.7 L235 493.2 L235.5 493 L236 493.3 L236.5 494.1 L237 492.4 L237.5 493.4 L238 489.2 L238.5 493 L239 493.6 L239.5 493.2 L240 493.1 L240.5 489.5 L241 494.4 L241.5 493.3 L242 492.8 L242.5 491.3 L243 492.8 L243.5 493.8 L244 493.7 L244.5 493.8 L245 493.2 L245.5 493.1 L246 492.8 L246.5 494.1 L247 493.9 L247.5 492.9 L248 492.4 L248.5 494.4 L249 493.5 L249.5 493.5 L250 493.1 L250.5 490.7 L251 493 L251.5 494.4 L252 491.6 L252.5 493 L253 493.1 L253.5 493 L254 493.4 L254.5 493.7 L255 493.4 L255.5 493.6 L256 492.4 L256.5 492.5 L257 494.3 L257.5 493.6 L258 493.4 L258.5 494.1 L259 493.2 L259.5 492.2 L260 493.2 L260.5 494.1 L261 493 L261.5 493.1 L262 492.6 L262.5 491.2 L263 493.6 L263.5 494 L264 493.6 L264.5 492.7 L265 493.1 L265.5 494.2 L266 492.4 L266.5 492.7 L267 493.9 L267.5 493.7 L268 493.2 L268.5 492.5 L269 492.8 L269.5 493.4 L270 492.5 L270.5 493.1 L271 490.9 L271.5 492.7 L272 493.8 L272.5 493.7 L273 493.9 L273.5 493.4 L274 493.4 L274.5 494.1 L275 492.5 L275.5 492.1 L276 494.4 L276.5 493.4 L277 493.4 L277.5 493.7 L278 493 L278.5 493.4 L279 493.6 L279.5 493.1 L280 493.1 L280.5 492.7 L281 494.1 L281.5 494.1 L282 494.1 L282.5 494.3 L283 493.8 L283.5 494.1 L284 494 L284.5 493.9 L285 492.5 L285.5 493.3 L286 492.3 L286.5 489.4 L287 493 L287.5 493.6 L288 493.8 L288.5 493.6 L289 493.4 L289.5 492.9 L290 493 L290.5 493.7 L291 493.4 L291.5 493.5 L292 493.6 L292.5 493.6 L293 493.9 L293.5 493.4 L294 493 L294.5 493 L295 492.5 L295.5 493.8 L296 488.8 L296.5 494 L297 493.1 L297.5 493.1 L298 492.9 L298.5 493.4 L299 493.7 L299.5 493.9 L300 493.1 L300.5 493.5 L301 493.1 L301.5 494 L302 493.6 L302.5 493.3 L303 492.9 L303.5 492.1 L304 494 L304.5 492.9 L305 492.6 L305.5 492.4 L306 492.5 L306.5 493.2 L307 492.4 L307.5 492.8 L308 491.6 L308.5 493.1 L309 493 L309.5 493.7 L310 493.8 L310.5 490.2 L311 493.6 L311.5 493.3 L312 493 L312.5 493.8 L313 493.8 L313.5 492.5 L314 493.3 L314.5 493.3 L315 493.8 L315.5 493.5 L316 493.3 L316.5 492.9 L317 491.3 L317.5 493.4 L318 493.4 L318.5 485.1 L319 492.6 L319.5 493.5 L320 493.7 L320.5 493.7 L321 493.6 L321.5 493.6 L322 493 L322.5 493.3 L323 493 L323.5 494.1 L324 493.2 L324.5 493.5 L325 493.5 L325.5 494.3 L326 492.6 L326.5 491.9 L327 492.7 L327.5 493.3 L328 493.6 L328.5 493.8 L329 492.4 L329.5 493.9 L330 491.5 L330.5 493.6 L331 492.9 L331.5 493.4 L332 491 L332.5 493.8 L333 493.1 L333.5 493.9 L334 494.4 L334.5 493.5 L335 493.7 L335.5 493.6 L336 494 L336.5 494.4 L337 493.7 L337.5 491.9 L338 493.4 L338.5 492.6 L339 493.2 L339.5 493.2 L340 493.9 L340.5 493.8 L341 494 L341.5 493.7 L342 493.7 L342.5 492.9 L343 493.8 L343.5 493.3 L344 493.4 L344.5 493.6 L345 493.8 L345.5 493.1 L346 491.7 L346.5 493.6 L347 493.6 L347.5 492.8 L348 493.4 L348.5 493.2 L349 493.6 L349.5 492.7 L350 493.3 L350.5 493.5 L351 492.6 L351.5 493.5 L352 493.8 L352.5 493.4 L353 494.4 L353.5 494.1 L354 492.8 L354.5 493.1 L355 492.4 L355.5 493.5 L356 492.6 L356.5 493.3 L357 493.8 L357.5 493.5 L358 492.2 L358.5 493.7 L359 493.2 L359.5 494.1 L360 492.8 L360.5 494.5 L361 493.4 L361.5 493 L362 493.3 L362.5 492.8 L363 492.6 L363.5 490.3 L364 493.5 L364.5 493.3 L365 493 L365.5 493.1 L366 493.1 L366.5 492.9 L367 493.4 L367.5 493.8 L368 492.6 L368.5 494.3 L369 490 L369.5 493 L370 493 L370.5 493.7 L371 493.9 L371.5 493.2 L372 491.8 L372.5 493.7 L373 493.7 L373.5 491.4 L374 493.2 L374.5 494 L375 493.3 L375.5 492.2 L376 493 L376.5 490.7 L377 492.6 L377.5 493.7 L378 493.8 L378.5 492.6 L379 494 L379.5 492.3 L380 493.7 L380.5 493.4 L381 493.2 L381.5 492.5 L382 493 L382.5 493.9 L383 492.4 L383.5 493.9 L384 492.7 L384.5 493.7 L385 493.2 L385.5 493.7 L386 493.3 L386.5 493.7 L387 491.8 L387.5 492.4 L388 492.7 L388.5 493.8 L389 493.7 L389.5 492.2 L390 492.3 L390.5 493.8 L391 490.9 L391.5 492.8 L392 493.6 L392.5 493.2 L393 493.2 L393.5 493.4 L394 493.4 L394.5 492.5 L395 490.1 L395.5 494.1 L396 493.6 L396.5 492 L397 494 L397.5 493.5 L398 493.3 L398.5 494 L399 493.1 L399.5 494 L400 493.5 L400.5 493.4 L401 493.3 L401.5 493.5 L402 493.6 L402.5 494.2 L403 492.9 L403.5 492.9 L404 493.4 L404.5 493.7 L405 491.1 L405.5 492.9 L406 493.6 L406.5 491.4 L407 493 L407.5 493.7 L408 493.2 L408.5 493.5 L409 493.3 L409.5 493.2 L410 493.4 L410.5 491.7 L411 493.2 L411.5 492.9 L412 493.4 L412.5 494.3 L413 493.2 L413.5 492.8 L414 494.8 L414.5 493.3 L415 493.5 L415.5 492.9 L416 493.5 L416.5 492.8 L417 493.9 L417.5 493.9 L418 493.3 L418.5 493.6 L419 493.4 L419.5 488.8 L420 493.1 L420.5 493.3 L421 494.1 L421.5 493.2 L422 493.1 L422.5 492.8 L423 493.1 L423.5 493.4 L424 493.2 L424.5 493.5 L425 493.1 L425.5 493.3 L426 493.6 L426.5 494.1 L427 493.7 L427.5 492.8 L428 493.6 L428.5 494.5 L429 491.3 L429.5 493.5 L430 492.3 L430.5 493.2 L431 493.1 L431.5 493.5 L432 492.8 L432.5 493.5 L433 492.7 L433.5 493.7 L434 492.1 L434.5 494 L435 493.2 L435.5 493.6 L436 493.5 L436.5 494 L437 493.8 L437.5 494.4 L438 492.9 L438.5 488.5 L439 489 L439.5 493.7 L440 493.4 L440.5 493.5 L441 493.4 L441.5 493.1 L442 493.6 L442.5 492.6 L443 494.3 L443.5 492.2 L444 493 L444.5 492.5 L445 493.9 L445.5 492 L446 492.6 L446.5 493.6 L447 493.6 L447.5 493.1 L448 492.7 L448.5 493.1 L449 493.3 L449.5 493.4 L450 490.1 L450.5 493 L451 493.6 L451.5 492.8 L452 493.8 L452.5 492.7 L453 493.4 L453.5 493.4 L454 492.7 L454.5 492.8 L455 493.6 L455.5 493.8 L456 494 L456.5 493.7 L457 493 L457.5 492.9 L458 493.9 L458.5 493.6 L459 492.4 L459.5 493.5 L460 493.2 L460.5 492 L461 493.8 L461.5 492.3 L462 493.4 L462.5 493.5 L463 433.7 L463.5 434.3 L464 433.8 L464.5 434 L465 433.9 L465.5 434 L466 433.9 L466.5 433.8 L467 433.7 L467.5 435 L468 433.8 L468.5 433.7 L469 433.7 L469.5 436 L470 434.5 L470.5 433.9 L471 434.4 L471.5 434.5 L472 433.6 L472.5 433.9 L473 433.6 L473.5 434.6 L474 434.4 L474.5 434.2 L475 433.7 L475.5 434.5 L476 434.2 L476.5 434 L477 434.9 L477.5 433.9 L478 433.6 L478.5 434.6 L479 433.6 L479.5 434.3 L480 433.7 L480.5 433.9 L481 434 L481.5 434.2 L482 433.7 L482.5 434.6 L483 434.5 L483.5 433.9 L484 433.6 L484.5 435.6 L485 434.2 L485.5 433.9 L486 433.6 L486.5 433.8 L487 433.9 L487.5 433.5 L488 435.2 L488.5 435 L489 434.6 L489.5 434.5 L490 434.3 L490.5 435.1 L491 434.1 L491.5 434.2 L492 435.1 L492.5 434.6 L493 435.6 L493.5 435 L494 436.7 L494.5 436.5 L495 435.8 L495.5 436.2 L496 436.7 L496.5 438.3 L497 437.3 L497.5 437.7 L498 437.3 L498.5 437.3 L499 437.3 L499.5 438 L500 437.6 L500.5 438.3 L501 438.1 L501.5 438.4 L502 439.9 L502.5 438.9 L503 438.9 L503.5 439.1 L504 439.8 L504.5 440.5 L505 441.2 L505.5 440.8 L506 440.2 L506.5 440.4 L507 442.2 L507.5 440.9 L508 441.2 L508.5 441.7 L509 441.6 L509.5 441.5 L510 442.2 L510.5 443.4 L511 442.1 L511.5 442.3 L512 442.9 L512.5 443.3 L513 442.4 L513.5 442.6 L514 443.2 L514.5 441.8 L515 441.7 L515.5 441.6 L516 441.3 L516.5 441.6 L517 442.3 L517.5 441 L518 441 L518.5 440.9 L519 440.3 L519.5 440.2 L520 440.1 L520.5 441.2 L521 440 L521.5 440.5 L522 440.1 L522.5 439.8 L523 439.8 L523.5 440.2 L524 439.7 L524.5 439.6 L525 439.3 L525.5 439 L526 438 L526.5 438.5 L527 438.2 L527.5 439 L528 437.8 L528.5 438.1 L529 438.2 L529.5 437 L530 437.5 L530.5 437.1 L531 436.5 L531.5 437 L532 438.2 L532.5 436.2 L533 435.9 L533.5 436 L534 435.7 L534.5 435.6 L535 436.7 L535.5 435.7 L536 435.6 L536.5 435.9 L537 435.4 L537.5 435.4 L538 435.4 L538.5 435.2 L539 434 L539.5 434.4 L540 434.1 L540.5 434 L541 433.7 L541.5 434.4 L542 433.9 L542.5 434 L543 433.9 L543.5 434.4 L544 433.9 L544.5 434.4 L545 433.7 L545.5 433.5 L546 433.5 L546.5 433.7 L547 434.8 L547.5 434.8 L548 434.3 L548.5 434.5 L549 434.7 L549.5 435.2 L550 435.1 L550.5 434.4 L551 435.3 L551.5 434.8 L552 434.9 L552.5 435.3 L553 436.1 L553.5 435.8 L554 435.4 L554.5 435.8 L555 435.6 L555.5 436 L556 436.2 L556.5 436.1 L557 437 L557.5 436.2 L558 436.2 L558.5 436.2 L559 436.7 L559.5 436.2 L560 437.1 L560.5 437.3 L561 436.8 L561.5 436.9 L562 436.9 L562.5 437.4 L563 437.3 L563.5 437.6 L564 438.5 L564.5 437.6 L565 437.7 L565.5 437.9 L566 437.8 L566.5 437.9 L567 438.9 L567.5 438.1 L568 438.5 L568.5 438.9 L569 438.1 L569.5 438.2 L570 438.5 L570.5 439.5 L571 438.8 L571.5 439.3 L572 440.3 L572.5 439.2 L573 439.9 L573.5 439.5 L574 439.3 L574.5 439.3 L575 440.1 L575.5 440.3 L576 439.6 L576.5 440.6 L577 440.3 L577.5 440.3 L578 440.4 L578.5 440.6 L579 441.2 L579.5 440.6 L580 441 L580.5 441.8 L581 441.7 L581.5 441.2 L582 441.8 L582.5 440.8 L583 441.5 L583.5 441.2 L584 441.2 L584.5 441.9 L585 493.6 L585.5 493.9 L586 493.6 L586.5 492.5 L587 493.2 L587.5 494.3 L588 493.5 L588.5 493.1 L589 493 L589.5 493.5 L590 493.6 L590.5 492.6 L591 493.1 L591.5 490.9 L592 493.8 L592.5 493.3 L593 492.9 L593.5 493.6 L594 493.5 L594.5 493.1 L595 492.9 L595.5 493.4 L596 493.6 L596.5 493.7 L597 493.7 L597.5 492.5 L598 492.9 L598.5 492.4 L599 493.4 L599.5 492.6 L600 494.7 L600.5 493.5 L601 493 L601.5 493.5 L602 493.9 L602.5 493.8 L603 494.6 L603.5 493.1 L604 493.7 L604.5 493.1 L605 493.8 L605.5 491.3 L606 493.1 L606.5 493.6 L607 494 L607.5 493.1 L608 493 L608.5 494.5 L609 493 L609.5 493.3 L610 494.1 L610.5 493.2 L611 494 L611.5 493.6 L612 493.3 L612.5 491.7 L613 493.7 L613.5 492.8 L614 493.5 L614.5 493.2 L615 493 L615.5 493.6 L616 493.3 L616.5 493.4 L617 493.2 L617.5 493.4 L618 492.2 L618.5 493.1 L619 493.8 L619.5 493 L620 492.5 L620.5 493.2 L621 494.2 L621.5 492.3 L622 492.5 L622.5 493 L623 493.6 L623.5 488.5 L624 492.5 L624.5 493.7 L625 493.1 L625.5 494.3 L626 493.3 L626.5 494.1 L627 494.3 L627.5 493.9 L628 493.4 L628.5 493.4 L629 492.9 L629.5 493.2 L630 492.7 L630.5 490.4 L631 493.7 L631.5 493.2 L632 493.7 L632.5 494 L633 492.9 L633.5 492.5 L634 492.9 L634.5 493.9 L635 493.9 L635.5 492.8 L636 493.1 L636.5 493.1 L637 492.5 L637.5 492.8 L638 493.6 L638.5 493.5 L639 493.3 L639.5 492.6 L640 493.3 L640.5 493.3 L641 493.2 L641.5 493.6 L642 493.6 L642.5 492.8 L643 492.8 L643.5 492.9 L644 492.6 L644.5 494.2 L645 493.9 L645.5 493.9 L646 493.4 L646.5 493.6 L647 491.1 L647.5 493.4 L648 491.7 L648.5 493.4 L649 492.5 L649.5 493.3 L650 492.8 L650.5 493.5 L651 494 L651.5 492.9 L652 493.5 L652.5 493.8 L653 492.8 L653.5 493 L654 493.5 L654.5 492.9 L655 493.6 L655.5 493.5 L656 493.4 L656.5 492.3 L657 493 L657.5 492.9 L658 492.9 L658.5 493.1 L659 493.6 L659.5 492.8 L660 491.3 L660.5 494 L661 493.5 L661.5 490.3 L662 493.4 L662.5 493 L663 493.6 L663.5 492.7 L664 494.1 L664.5 494.4 L665 493 L665.5 492.5 L666 492.6 L666.5 493.6 L667 493.7 L667.5 492.9 L668 493 L668.5 494.1 L669 494.2 L669.5 493 L670 493.6 L670.5 493.1 L671 492.8 L671.5 489.1 L672 493.2 L672.5 493.7 L673 491.6 L673.5 490.4 L674 491.6 L674.5 493.1 L675 493.2 L675.5 492 L676 494.1 L676.5 493.2 L677 493.6 L677.5 493.2 L678 493.4 L678.5 492.8 L679 493.6 L679.5 490.8 L680 493.3 L680.5 493.9 L681 493.6 L681.5 492.8 L682 493 L682.5 493.3 L683 492.5 L683.5 492.4 L684 493 L684.5 492.9 L685 492.7 L685.5 493.5 L686 493.6 L686.5 493.4 L687 492.9 L687.5 490 L688 494.4 L688.5 493 L689 493.5 L689.5 493.3 L690 493.8 L690.5 492.1 L691 493.5 L691.5 491 L692 493.2 L692.5 492.5 L693 493.5 L693.5 491.5 L694 493.6 L694.5 493.1 L695 492 L695.5 493.2 L696 493.7 L696.5 493.5 L697 491.3 L697.5 493.6 L698 492.3 L698.5 493.1 L699 494.1 L699.5 492.9 L700 493.8 L700.5 493.2 L701 493.3 L701.5 493.2 L702 494.3 L702.5 494.1 L703 494 L703.5 493 L704 494.5 L704.5 493.3 L705 492.9 L705.5 494.5 L706 493.4 L706.5 493.4 L707 493.4 L707.5 492.1 L708 493.7 L708.5 493.3 L709 493.7 L709.5 492.9 L710 492.6 L710.5 493.8 L711 493.2 L711.5 493.7 L712 493 L712.5 493.5 L713 493.1 L713.5 493.5 L714 493 L714.5 493 L715 491.5 L715.5 493 L716 491.3 L716.5 493.1 L717 493.1 L717.5 494.2 L718 493 L718.5 492.9 L719 492.5 L719.5 492.3 L720 492 L720.5 491.5 L721 492.5 L721.5 493.1 L722 492.8 L722.5 493.7 L723 492.4 L723.5 493.3 L724 493.6 L724.5 493.5 L725 494 L725.5 492.8 L726 492.7 L726.5 493.3 L727 493.6 L727.5 493.1 L728 493.6 L728.5 492.8 L729 493.6 L729.5 493.4 L730 493.6 L730.5 493.7 L731 493.1 L731.5 491.9 L732 492.5 L732.5 492.4 L733 493.8 L733.5 493 L734 493.2 L734.5 492.9 L735 493.4 L735.5 493.6 L736 493.1 L736.5 493.5 L737 493.2 L737.5 493.2 L738 492 L738.5 493.7 L739 493.1 L739.5 492.8 L740 493.7 L740.5 493.3 L741 493.8 L741.5 493.1 L742 493.8 L742.5 493.5 L743 493.3 L743.5 490.7 L744 491.2 L744.5 493 L745 493.7 L745.5 493.5 L746 493.9 L746.5 493.2 L747 492.9 L747.5 493 L748 493.5 L748.5 492.8 L749 492.7 L749.5 493.8 L750 493.4 L750.5 493.2 L751 494.4 L751.5 494 L752 494 L752.5 493.3 L753 492.9 L753.5 493 L754 493.2 L754.5 493.2 L755 492.5 L755.5 492.9 L756 493.9 L756.5 493.6 L757 494.6 L757.5 492.8 L758 492.3 L758.5 492.7 L759 493 L759.5 492.9 L760 493.6 L760.5 492.7 L761 493.4 L761.5 493.3 L762 493.3 L762.5 492.1 L763 493.7 L763.5 493.4 L764 494.3 L764.5 493.2 L765 493.9 L765.5 493.1 L766 492.6 L766.5 491.3 L767 494 L767.5 489.2 L768 493.8 L768.5 493.6 L769 490 L769.5 493.7 L770 493 L770.5 493.4 L771 493.3 L771.5 493.4 L772 492.8 L772.5 493.5 L773 493.5 L773.5 492.8 L774 493.9 L774.5 492.9 L775 493.3 L775.5 493 L776 494.2 L776.5 493.4 L777 492.5 L777.5 493.4 L778 487.6 L778.5 494.3 L779 493.8 L779.5 493.5 L780 493.8 L780.5 493.6 L781 493.3 L781.5 493.4 L782 493.7 L782.5 493.8 L783 494.4 L783.5 488.6 L784 490.1 L784.5 493 L785 491.2 L785.5 493.1 L786 493.9 L786.5 492.4 L787 493.7 L787.5 493.4 L788 493.8 L788.5 493.1 L789 492.1 L789.5 493.4 L790 494.6 L790.5 492.5 L791 494.2 L791.5 493.6 L792 493 L792.5 492.4 L793 492.3 L793.5 494.3 L794 493.4 L794.5 494.5 L795 493.8 L795.5 493.2 L796 492.7 L796.5 493.1 L797 493 L797.5 492 L798 493.6 L798.5 491.9 L799 493.5 L799.5 493.3 L800 493.7 L800.5 493.1 L801 493.5 L801.5 493.6 L802 493 L802.5 493.7 L803 493.9 L803.5 493.8 L804 492.9 L804.5 494 L805 493.2 L805.5 493 L806 494.5 L806.5 492.7 L807 493.2 L807.5 494.1 L808 493 L808.5 493.5 L809 493.4 L809.5 494.1 L810 493.5 L810.5 493.2 L811 493.7 L811.5 493.6 L812 494 L812.5 493.2 L813 489.8 L813.5 493.9 L814 493.2 L814.5 493 L815 493.8 L815.5 492.5 L816 493.9 L816.5 493.1 L817 493.1 L817.5 493.7 L818 493.9 L818.5 493.2 L819 493.8 L819.5 493.1 L820 493.5 L820.5 493.6 L821 493 L821.5 493.7 L822 494.3 L822.5 493.9 L823 493.5 L823.5 491.9 L824 493.2 L824.5 493.8 L825 492.7 L825.5 493.6 L826 492.7 L826.5 493.2 L827 493.1 L827.5 493.3 L828 493.5 L828.5 493.5 L829 493.3 L829.5 493.6 L830 494.1 L830.5 493.6 L831 493.4 L831.5 493 L832 493.5 L832.5 493 L833 494.6 L833.5 493.3 L834 493 L834.5 490.5 L835 492.5 L835.5 494.2 L836 493.7 L836.5 492.9 L837 493.4 L837.5 493.8 L838 492.9 L838.5 491.1 L839 493 L839.5 492.5 L840 492.9 L840.5 490.4 L841 493 L841.5 492.9 L842 494.1 L842.5 493.6 L843 492.5 L843.5 493 L844 493.1 L844.5 493.6 L845 494 L845.5 492.9 L846 494 L846.5 494.2 L847 493.8 L847.5 492.6 L848 493.9 L848.5 493.5 L849 494.3 L849.5 493.1 L850 493.4 L850.5 492.8 L851 492.8 L851.5 493.3 L852 494.1 L852.5 493.9 L853 493.3 L853.5 493.4 L854 493.5 L854.5 492.8 L855 493.6 L855.5 493 L856 487.3 L856.5 491.9 L857 489.6 L857.5 493.2 L858 492.2 L858.5 492.5 L859 492.6 L859.5 494.8 L860 493.5 L860.5 493.3 L861 492.5 L861.5 492.3 L862 493 L862.5 492.7 L863 491.4 L863.5 493.5 L864 493.4 L864.5 492.8 L865 494.6 L865.5 493.5 L866 493.5 L866.5 493.1 L867 492.4 L867.5 494.1 L868 491.6 L868.5 494.7 L869 492.9 L869.5 493.1 L870 493.5 L870.5 493.5 L871 489.6 L871.5 488.4 L872 494.6 L872.5 493 L873 493.1 L873.5 493.4 L874 494.1 L874.5 493.9 L875 492.7 L875.5 493.1 L876 493.4 L876.5 492.8 L877 492.8 L877.5 494.7 L878 493.2 L878.5 494.1 L879 494.1 L879.5 493.3 L880 493.7 L880.5 493.1 L881 493.1 L881.5 494.3 L882 494.1 L882.5 488.7 L883 492.2 L883.5 493 L884 493 L884.5 493.6 L885 494 L885.5 493 L886 493.3 L886.5 493.4 L887 494 L887.5 493.3 L888 493.2 L888.5 491.6 L889 492.2 L889.5 493.1 L890 492.7 L890.5 491.3 L891 491.2 L891.5 493.2 L892 493.5 L892.5 493.9 L893 493.4 L893.5 490.3 L894 492.9 L894.5 493.3 L895 494 L895.5 494 L896 493.3 L896.5 493.8 L897 493.3 L897.5 493.7 L898 492.7 L898.5 494 L899 486.1 L899.5 494.2 L900 493.3 L900.5 492.5 L901 493.2 L901.5 493 L902 492.8 L902.5 493.7 L903 492.5 L903.5 493.6 L904 492.8 L904.5 493.4 L905 492.4 L905.5 493.3 L906 492.5 L906.5 493.7 L907 493.4 L907.5 493.2 L908 493.7 L908.5 492.6 L909 493.2 L909.5 494 L910 492.4 L910.5 493 L911 494.7 L911.5 493.4 L912 493.5 L912.5 493.3 L913 493.9 L913.5 493.7 L914 493.4 L914.5 493.2 L915 493.9 L915.5 493.7 L916 491.8 L916.5 493.7 L917 499.8 L9 499.8Z" fill="#a29b2e"/>
<g stroke="#141405" fill="none"><path d="M468.5 435V494" stroke-width="0.6"/><path d="M471.6 435V494" stroke-width="1.1"/><path d="M474.4 435V494" stroke-width="1.1"/><path d="M482.6 435V494" stroke-width="1.1"/><path d="M489.6 435V494" stroke-width="1.1"/><path d="M494.6 436.9V494" stroke-width="0.6"/><path d="M500.9 439.5V494" stroke-width="0.7"/><path d="M503.4 440.5V494" stroke-width="1.1"/><path d="M506.3 441.7V494" stroke-width="0.6"/><path d="M509.4 443V494" stroke-width="1.1"/><path d="M516.7 442.5V494" stroke-width="1.1"/><path d="M521.8 440.9V494" stroke-width="0.6"/><path d="M524.6 440V494" stroke-width="1.1"/><path d="M531.6 437.7V494" stroke-width="1.1"/><path d="M534 437V494" stroke-width="0.6"/><path d="M538.3 435.6V494" stroke-width="0.6"/><path d="M543.5 435V494" stroke-width="1.1"/><path d="M583.5 442.5V494" stroke-width="0.8"/><path d="M467.5 438.1V493" stroke="#8c8624" stroke-width="0.5" opacity="0.7"/><path d="M469.1 437.5V493" stroke="#8c8624" stroke-width="0.5" opacity="0.7"/><path d="M471.5 437.4V493" stroke="#b2aa3c" stroke-width="0.5" opacity="0.7"/><path d="M474.7 437.8V493" stroke="#8c8624" stroke-width="0.5" opacity="0.7"/><path d="M476.3 437.5V493" stroke="#8c8624" stroke-width="0.5" opacity="0.7"/><path d="M477.9 438.2V493" stroke="#8c8624" stroke-width="0.5" opacity="0.7"/><path d="M479.5 436V493" stroke="#b2aa3c" stroke-width="0.5" opacity="0.7"/><path d="M480.3 436.2V493" stroke="#8c8624" stroke-width="0.5" opacity="0.7"/><path d="M481.1 437V493" stroke="#8c8624" stroke-width="0.5" opacity="0.7"/><path d="M481.9 436.6V493" stroke="#8c8624" stroke-width="0.5" opacity="0.7"/><path d="M485.1 435V493" stroke="#b2aa3c" stroke-width="0.5" opacity="0.7"/><path d="M485.9 437.5V493" stroke="#8c8624" stroke-width="0.5" opacity="0.7"/><path d="M486.7 438.4V493" stroke="#8c8624" stroke-width="0.5" opacity="0.7"/><path d="M488.3 437.1V493" stroke="#b2aa3c" stroke-width="0.5" opacity="0.7"/><path d="M492.3 440.1V493" stroke="#8c8624" stroke-width="0.5" opacity="0.7"/><path d="M493.9 437.8V493" stroke="#8c8624" stroke-width="0.5" opacity="0.7"/><path d="M495.5 442.3V493" stroke="#8c8624" stroke-width="0.5" opacity="0.7"/><path d="M496.3 442.3V493" stroke="#8c8624" stroke-width="0.5" opacity="0.7"/><path d="M497.1 439.9V493" stroke="#8c8624" stroke-width="0.5" opacity="0.7"/><path d="M498.7 440.1V493" stroke="#8c8624" stroke-width="0.5" opacity="0.7"/><path d="M499.5 439V493" stroke="#b2aa3c" stroke-width="0.5" opacity="0.7"/><path d="M500.3 443.3V493" stroke="#8c8624" stroke-width="0.5" opacity="0.7"/><path d="M501.1 442.1V493" stroke="#b2aa3c" stroke-width="0.5" opacity="0.7"/><path d="M501.9 442.6V493" stroke="#8c8624" stroke-width="0.5" opacity="0.7"/><path d="M502.7 445.4V493" stroke="#8c8624" stroke-width="0.5" opacity="0.7"/><path d="M505.9 441.1V493" stroke="#8c8624" stroke-width="0.5" opacity="0.7"/><path d="M507.5 447.7V493" stroke="#8c8624" stroke-width="0.5" opacity="0.7"/><path d="M508.3 445.2V493" stroke="#b2aa3c" stroke-width="0.5" opacity="0.7"/><path d="M509.1 444.7V493" stroke="#8c8624" stroke-width="0.5" opacity="0.7"/><path d="M509.9 448.6V493" stroke="#b2aa3c" stroke-width="0.5" opacity="0.7"/><path d="M510.7 448.8V493" stroke="#8c8624" stroke-width="0.5" opacity="0.7"/><path d="M511.5 447.9V493" stroke="#8c8624" stroke-width="0.5" opacity="0.7"/><path d="M513.9 444.4V493" stroke="#b2aa3c" stroke-width="0.5" opacity="0.7"/><path d="M515.5 446.1V493" stroke="#8c8624" stroke-width="0.5" opacity="0.7"/><path d="M520.3 444.3V493" stroke="#b2aa3c" stroke-width="0.5" opacity="0.7"/><path d="M521.1 442.6V493" stroke="#8c8624" stroke-width="0.5" opacity="0.7"/><path d="M521.9 445.2V493" stroke="#b2aa3c" stroke-width="0.5" opacity="0.7"/><path d="M525.1 441.8V493" stroke="#8c8624" stroke-width="0.5" opacity="0.7"/><path d="M527.5 439.9V493" stroke="#8c8624" stroke-width="0.5" opacity="0.7"/><path d="M528.3 441.2V493" stroke="#8c8624" stroke-width="0.5" opacity="0.7"/><path d="M529.1 442.8V493" stroke="#8c8624" stroke-width="0.5" opacity="0.7"/><path d="M529.9 441.9V493" stroke="#8c8624" stroke-width="0.5" opacity="0.7"/><path d="M530.7 438V493" stroke="#b2aa3c" stroke-width="0.5" opacity="0.7"/><path d="M532.3 439.5V493" stroke="#b2aa3c" stroke-width="0.5" opacity="0.7"/><path d="M533.9 442.4V493" stroke="#8c8624" stroke-width="0.5" opacity="0.7"/><path d="M534.7 438.5V493" stroke="#b2aa3c" stroke-width="0.5" opacity="0.7"/><path d="M535.5 438.1V493" stroke="#8c8624" stroke-width="0.5" opacity="0.7"/><path d="M537.1 440V493" stroke="#8c8624" stroke-width="0.5" opacity="0.7"/><path d="M537.9 439.9V493" stroke="#8c8624" stroke-width="0.5" opacity="0.7"/><path d="M538.7 439.3V493" stroke="#8c8624" stroke-width="0.5" opacity="0.7"/><path d="M541.9 436.5V493" stroke="#8c8624" stroke-width="0.5" opacity="0.7"/><path d="M544.3 439.1V493" stroke="#b2aa3c" stroke-width="0.5" opacity="0.7"/><path d="M545.1 437V493" stroke="#b2aa3c" stroke-width="0.5" opacity="0.7"/><path d="M545.9 436V493" stroke="#8c8624" stroke-width="0.5" opacity="0.7"/><path d="M548.3 438V493" stroke="#8c8624" stroke-width="0.5" opacity="0.7"/><path d="M549.1 436.6V493" stroke="#b2aa3c" stroke-width="0.5" opacity="0.7"/><path d="M552.3 437.1V493" stroke="#8c8624" stroke-width="0.5" opacity="0.7"/><path d="M554.7 439.2V493" stroke="#b2aa3c" stroke-width="0.5" opacity="0.7"/><path d="M556.3 441.3V493" stroke="#8c8624" stroke-width="0.5" opacity="0.7"/><path d="M557.1 440V493" stroke="#b2aa3c" stroke-width="0.5" opacity="0.7"/><path d="M557.9 442.3V493" stroke="#b2aa3c" stroke-width="0.5" opacity="0.7"/><path d="M558.7 440.4V493" stroke="#8c8624" stroke-width="0.5" opacity="0.7"/><path d="M559.5 437.6V493" stroke="#8c8624" stroke-width="0.5" opacity="0.7"/><path d="M561.1 442.3V493" stroke="#b2aa3c" stroke-width="0.5" opacity="0.7"/><path d="M561.9 443.4V493" stroke="#b2aa3c" stroke-width="0.5" opacity="0.7"/><path d="M562.7 438.7V493" stroke="#8c8624" stroke-width="0.5" opacity="0.7"/><path d="M563.5 438.1V493" stroke="#8c8624" stroke-width="0.5" opacity="0.7"/><path d="M564.3 438.5V493" stroke="#8c8624" stroke-width="0.5" opacity="0.7"/><path d="M565.9 444.1V493" stroke="#8c8624" stroke-width="0.5" opacity="0.7"/><path d="M566.7 439.3V493" stroke="#8c8624" stroke-width="0.5" opacity="0.7"/><path d="M569.1 443V493" stroke="#b2aa3c" stroke-width="0.5" opacity="0.7"/><path d="M569.9 439.8V493" stroke="#8c8624" stroke-width="0.5" opacity="0.7"/><path d="M571.5 443.3V493" stroke="#8c8624" stroke-width="0.5" opacity="0.7"/><path d="M573.9 441.2V493" stroke="#b2aa3c" stroke-width="0.5" opacity="0.7"/><path d="M574.7 443.7V493" stroke="#8c8624" stroke-width="0.5" opacity="0.7"/><path d="M577.1 443.5V493" stroke="#8c8624" stroke-width="0.5" opacity="0.7"/><path d="M577.9 441.9V493" stroke="#b2aa3c" stroke-width="0.5" opacity="0.7"/><path d="M578.7 445.4V493" stroke="#8c8624" stroke-width="0.5" opacity="0.7"/><path d="M579.5 442.2V493" stroke="#b2aa3c" stroke-width="0.5" opacity="0.7"/><path d="M580.3 445.7V493" stroke="#b2aa3c" stroke-width="0.5" opacity="0.7"/><path d="M581.1 445.1V493" stroke="#8c8624" stroke-width="0.5" opacity="0.7"/><path d="M582.7 445.9V493" stroke="#b2aa3c" stroke-width="0.5" opacity="0.7"/></g>
<line x1="9" y1="499.2" x2="917" y2="499.2" stroke="#cfc992" stroke-width="0.9" stroke-dasharray="2.4 2.6"/>
<!-- separator -->
<line x1="9" y1="393.5" x2="917" y2="393.5" stroke="#8a8a8a" stroke-width="1"/>
</svg>

<svg class="a" style="left:0;top:0" width="1012" height="567" viewBox="0 0 1012 567">
 <!-- title bar slider -->
 <line x1="312" y1="277.5" x2="614" y2="277.5" stroke="#c8c8c8" stroke-width="1"/>
 <path d="M451 273.5 H449 V281.5 H451 M476 273.5 H478 V281.5 H476" fill="none" stroke="#c8c8c8" stroke-width="1"/>
 <path d="M459 271 L467 271 L463 273.5 Z" fill="#f08a20"/>
 <rect x="459.5" y="274.5" width="7" height="8" rx="1.5" fill="#3b3b3b" stroke="#f08a20" stroke-width="1"/>
 <path d="M458 283.5 L468 283.5 L463 289 Z" fill="#f08a20"/>
 <!-- C1 tag -->
 <path d="M11 318 H24 L28.5 324 L24 330 H11 Z" fill="#f2e82a"/>
 <!-- C1-M tag -->
 <path d="M10.5 492.5 H32.5 L38.5 499 L32.5 505.5 H10.5 Z" fill="#1e1c06" stroke="#a29b2e" stroke-width="1"/>
 <!-- zoom triangle -->
 <path d="M895 286 L913 286 L913 304 Z" fill="#5a5a5a"/>
 <circle cx="908.5" cy="290.5" r="2.3" fill="none" stroke="#ccc" stroke-width="0.9"/>
 <line x1="906.8" y1="292.2" x2="903" y2="296" stroke="#ccc" stroke-width="1"/>
 <!-- red arrow -->
 <line x1="296" y1="387.5" x2="604" y2="387.5" stroke="#e8281e" stroke-width="2"/>
 <path d="M290 387.5 L300 382.5 L300 392.5 Z" fill="#e8281e"/>
 <path d="M609 387.5 L598 382.5 L598 392.5 Z" fill="#e8281e"/>
 <!-- red ellipse -->
 <ellipse cx="442.5" cy="387.5" rx="24.5" ry="16" fill="none" stroke="#e8281e" stroke-width="2"/>
 <rect x="433.5" y="383.5" width="17" height="10" fill="#48450f" stroke="#d0c850" stroke-width="1"/>
 <!-- trigger T marker -->
 <path d="M458.5 394.5 H467.5 V404.5 H465 L463 407.5 L461 404.5 H458.5 Z" fill="#000" stroke="#f08a20" stroke-width="1"/>
 <!-- yellow arrow -->
 <path d="M904.5 467.5 L912.5 462 L912.5 473 Z" fill="#f2e82a"/>
 <line x1="910" y1="467.5" x2="917" y2="467.5" stroke="#f2e82a" stroke-width="2"/>
 <!-- red circle right -->
 <ellipse cx="908" cy="466" rx="17.5" ry="15.5" fill="none" stroke="#e8281e" stroke-width="2"/>
</svg>
<div class="a" style="left:13.5px;top:319px;color:#222;font-size:9px;line-height:10px;letter-spacing:0px">C&#8201;1</div>
<div class="a" style="left:14.5px;top:495px;color:#b0a838;font-size:8px;line-height:9px">C&#8201;1-<i>M</i></div>
<div class="a" style="left:461px;top:275px;color:#f08a20;font-size:6px;line-height:7px">T</div>
<div class="a" style="left:460.5px;top:396px;color:#f08a20;font-size:6.5px;line-height:7px">T</div>

<!-- spectrum labels -->
<div class="lbl" style="left:860px;top:59.5px;width:54px;text-align:right">71 dBuV</div>
<div class="lbl" style="left:860px;top:82px;width:54px;text-align:right">61 dBuV</div>
<div class="lbl" style="left:860px;top:105px;width:54px;text-align:right">51 dBuV</div>
<div class="lbl" style="left:860px;top:127.5px;width:54px;text-align:right">41 dBuV</div>
<div class="lbl" style="left:860px;top:150px;width:54px;text-align:right">31 dBuV</div>
<div class="lbl" style="left:860px;top:173px;width:54px;text-align:right">21 dBuV</div>
<div class="lbl" style="left:860px;top:195.5px;width:54px;text-align:right">11 dBuV</div>
<div class="lbl" style="left:860px;top:218px;width:54px;text-align:right">1 dBuV</div>
<div class="lbl" style="left:860px;top:241px;width:54px;text-align:right">-9 dBuV</div>
<div class="lbl" style="left:24px;top:258.5px">0 Hz</div>
<div class="lbl" style="left:860px;top:258.5px;width:43px;text-align:right">200.0 MHz</div>

<!-- markers -->
<svg class="a" style="left:0;top:0" width="1012" height="300" viewBox="0 0 1012 300">
 <path d="M164.5 40.5 L171.5 40.5 L168 48 Z M170.5 40.5 L177.5 40.5 L174 48 Z" fill="none" stroke="#fff" stroke-width="1.2"/>
 <path d="M185 40 L197 40 L191 53 Z" fill="#ee2222"/>
 <path d="M459.5 40.5 L467.5 40.5 L463.5 48.5 Z" fill="none" stroke="#fff" stroke-width="1"/>
 <path d="M550 40.5 L558 40.5 L554 48.5 Z" fill="none" stroke="#fff" stroke-width="1"/>
 <!-- dBuV M N badge -->
 <path d="M11 40.5 L28 40.5 L22 45.5 L11 45.5 Z" fill="#9a9028" stroke="#d8cc30" stroke-width="1"/>
 <rect x="11" y="45.5" width="11" height="7" fill="#f2e82a"/>
 <rect x="11.5" y="52.5" width="10" height="7.5" fill="#000" stroke="#a89e2a" stroke-width="1"/>
</svg>
<div class="a" style="left:188.5px;top:42px;color:#fff;font-size:6px;line-height:7px">R</div>
<div class="a" style="left:12px;top:40.5px;color:#222;font-size:5px;line-height:5px;font-weight:bold">dBuV</div>
<div class="a" style="left:13px;top:45.5px;color:#222;font-size:7px;line-height:7px">M</div>
<div class="a" style="left:13.5px;top:53px;color:#fff;font-size:7px;line-height:7px">N</div>
<div class="wt" style="left:169px;top:50px">3 36.2</div>
<div class="wt" style="left:169px;top:56.8px">1 18.1</div>
<div class="wt" style="left:191.5px;top:50px;color:#e02828">40.0 MHz</div>
<div class="wt" style="left:191.5px;top:56.8px;color:#e02828">25.7 dB&#956;V</div>
<div class="wt" style="left:465px;top:50px">100.0 MHz</div>
<div class="wt" style="left:465px;top:56.8px">21 dB&#956;V</div>
<div class="wt" style="left:556px;top:50px">120.0 MHz</div>
<div class="wt" style="left:556px;top:56.8px">21.8 dB&#956;V</div>

<!-- waveform labels upper -->
<div class="lbl" style="left:860px;top:291.5px;width:54px;text-align:right">12.4 mV</div>
<div class="lbl" style="left:860px;top:302.5px;width:54px;text-align:right">9.3 mV</div>
<div class="lbl" style="left:860px;top:313.5px;width:54px;text-align:right">6.2 mV</div>
<div class="lbl" style="left:860px;top:324.5px;width:54px;text-align:right">3.1 mV</div>
<div class="lbl" style="left:860px;top:335px;width:54px;text-align:right">0 V</div>
<div class="lbl" style="left:860px;top:346px;width:54px;text-align:right">-3.1 mV</div>
<div class="lbl" style="left:860px;top:357px;width:54px;text-align:right">-6.2 mV</div>
<div class="lbl" style="left:860px;top:368px;width:54px;text-align:right">-9.3 mV</div>
<div class="lbl" style="left:860px;top:379px;width:54px;text-align:right">-12.4 mV</div>
<!-- time labels -->
<div class="wt" style="left:92px;top:384.5px;color:#ccc">-4 ms</div>
<div class="wt" style="left:183px;top:384.5px;color:#ccc">-3 ms</div>
<div class="wt" style="left:273px;top:384.5px;color:#ccc">-2 ms</div>
<div class="wt" style="left:364px;top:384.5px;color:#ccc">-1 ms</div>
<div class="wt" style="left:459px;top:384.5px;color:#ccc">0 s</div>
<div class="wt" style="left:546.5px;top:384.5px;color:#ccc">1 ms</div>
<div class="wt" style="left:637.5px;top:384.5px;color:#ccc">2 ms</div>
<div class="wt" style="left:728px;top:384.5px;color:#ccc">3 ms</div>
<div class="wt" style="left:819px;top:384.5px;color:#ccc">4 ms</div>
<!-- lower labels -->
<div class="lbl2" style="left:860px;top:403px;width:54px;text-align:right">8.8 mV</div>
<div class="lbl2" style="left:860px;top:414.5px;width:54px;text-align:right">7.7 mV</div>
<div class="lbl2" style="left:860px;top:426.5px;width:54px;text-align:right">6.6 mV</div>
<div class="lbl2" style="left:860px;top:438.5px;width:54px;text-align:right">5.5 mV</div>
<div class="lbl2" style="left:860px;top:450px;width:54px;text-align:right">4.4 mV</div>
<div class="lbl2" style="left:860px;top:461.5px;width:54px;text-align:right">3.3 mV</div>
<div class="lbl2" style="left:860px;top:473.5px;width:54px;text-align:right">2.2 mV</div>
<div class="lbl2" style="left:860px;top:484.5px;width:54px;text-align:right">1.1 mV</div>
<div class="lbl2" style="left:860px;top:496.5px;width:54px;text-align:right">0 V</div>

</body></html>
